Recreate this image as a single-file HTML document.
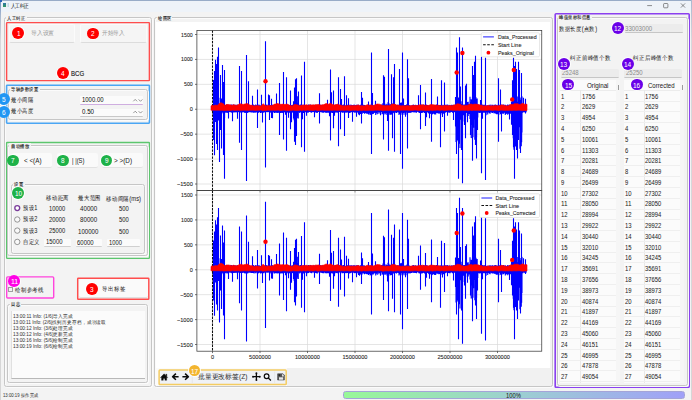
<!DOCTYPE html>
<html><head><meta charset="utf-8">
<style>
*{margin:0;padding:0;box-sizing:border-box}
html,body{width:692px;height:400px;overflow:hidden;background:#f3f3f3;font-family:"Liberation Sans",sans-serif;color:#222}
.a{position:absolute}
.t{position:absolute;white-space:nowrap;line-height:1;transform-origin:0 0;-webkit-text-stroke:0.05px currentColor}
</style></head><body>
<div class="a" style="left:0.00px;top:0.00px;width:692.00px;height:11.60px;background:#eef3f9"></div>
<div class="a" style="left:0.00px;top:0.00px;width:692.00px;height:0.80px;background:#98acc8"></div>
<div class="a" style="left:0.00px;top:0.00px;width:1.00px;height:400.00px;background:linear-gradient(180deg,#6f8fc0 0,#a9b9d0 16px,#d6d8dc 40px,#d6d6d6 100%)"></div>
<div class="a" style="left:691.00px;top:0.00px;width:1.00px;height:400.00px;background:linear-gradient(180deg,#a9b9d0 0,#d6d8dc 40px,#d6d6d6 100%)"></div>
<div class="a" style="left:0.00px;top:0.00px;width:1.60px;height:1.60px;background:#2a62b8"></div>
<div class="a" style="left:3.20px;top:3.40px;width:2.80px;height:3.80px;background:linear-gradient(180deg,#2f74a8,#2f9a5c)"></div>
<div class="a" style="left:6.30px;top:3.40px;width:2.60px;height:3.80px;background:linear-gradient(90deg,#f4f4f4,#b8d4e4)"></div>
<div id="t0" class="t" style="left:10.60px;top:4.02px;font-size:10.40px;color:#111;transform:scale(0.4300,0.540);">人工纠正</div>
<svg class="a" style="left:0;top:0" width="692" height="20"><path d="M647.2 5.6 H652" stroke="#444" stroke-width="0.6"/><rect x="663.6" y="3.5" width="4.3" height="4.3" rx="0.8" fill="none" stroke="#444" stroke-width="0.6"/><path d="M680.9 3.4 L685.1 7.6 M685.1 3.4 L680.9 7.6" stroke="#444" stroke-width="0.6"/></svg>
<div class="a" style="left:4px;top:17px;width:148px;height:370px;border:1px solid #c6c6c6;border-radius:2.5px;box-shadow:inset 1px 1px 0 #fbfbfb,1px 1px 0 #fbfbfb"></div>
<div class="a" style="left:5.95px;top:15.20px;width:20.65px;height:5.00px;background:#f3f3f3"></div>
<div id="t1" class="t" style="left:7.15px;top:15.53px;font-size:9.80px;color:#222;transform:scale(0.4562,0.540);-webkit-text-stroke:0.18px #222">人工纠正</div>
<svg class="a" style="left:0;top:0" width="692" height="400"><rect x="6.6" y="22.6" width="142.8" height="58" rx="0.6" fill="none" stroke="#ff4d4d" stroke-width="1.45"/></svg>
<div class="a" style="left:8.70px;top:23.60px;width:66.30px;height:19.00px;background:#f5f5f5;border-radius:2px;border:0.6px solid #fbfbfb;border-bottom:1px solid #dcdcdc"></div>
<div class="a" style="left:79.80px;top:23.60px;width:67.40px;height:19.00px;background:#f5f5f5;border-radius:2px;border:0.6px solid #fbfbfb;border-bottom:1px solid #dcdcdc"></div>
<div id="t2" class="t" style="left:30.70px;top:29.95px;font-size:11.40px;color:#9c9c9c;transform:scale(0.5273,0.540);">导入设置</div>
<div id="t3" class="t" style="left:102.30px;top:29.97px;font-size:11.40px;color:#9c9c9c;transform:scale(0.5091,0.540);">开始导入</div>
<div class="a" style="left:11.70px;top:26.20px;width:13.40px;height:13.40px;border-radius:50%;background:rgba(255,255,255,0.85)"></div>
<div class="a" style="left:12.40px;top:26.90px;width:12.00px;height:12.00px;border-radius:50%;background:#ff0000"></div>
<div id="t4" class="t" style="left:16.60px;top:29.80px;font-size:14.80px;color:#fff;transform:scale(0.4372,0.540);">1</div>
<div class="a" style="left:86.60px;top:26.80px;width:12.80px;height:12.80px;border-radius:50%;background:rgba(255,255,255,0.85)"></div>
<div class="a" style="left:87.30px;top:27.50px;width:11.40px;height:11.40px;border-radius:50%;background:#ff0000"></div>
<div id="t5" class="t" style="left:91.20px;top:30.10px;font-size:14.80px;color:#fff;transform:scale(0.4372,0.540);">2</div>
<div class="a" style="left:56.20px;top:66.65px;width:13.40px;height:13.40px;border-radius:50%;background:rgba(255,255,255,0.85)"></div>
<div class="a" style="left:56.90px;top:67.35px;width:12.00px;height:12.00px;border-radius:50%;background:#ff0000"></div>
<div id="t6" class="t" style="left:61.10px;top:70.25px;font-size:14.80px;color:#fff;transform:scale(0.4372,0.540);">4</div>
<div id="t7" class="t" style="left:70.95px;top:69.90px;font-size:14.80px;color:#1a1a1a;transform:scale(0.4099,0.540);-webkit-text-stroke:0.3px #1a1a1a">BCG</div>
<svg class="a" style="left:0;top:0" width="692" height="400"><rect x="6.6" y="85.2" width="142.8" height="38.0" rx="0.6" fill="none" stroke="#4aa6f4" stroke-width="1.6"/></svg>
<div class="a" style="left:8px;top:89px;width:140px;height:31px;border:1px solid #c6c6c6;border-radius:2.5px;box-shadow:inset 1px 1px 0 #fbfbfb,1px 1px 0 #fbfbfb"></div>
<div class="a" style="left:9.70px;top:86.50px;width:30.00px;height:5.00px;background:#f3f3f3"></div>
<div id="t8" class="t" style="left:10.90px;top:86.54px;font-size:9.80px;color:#222;transform:scale(0.4600,0.540);-webkit-text-stroke:0.18px #222">导轴参数设置</div>
<div id="t9" class="t" style="left:10.90px;top:97.13px;font-size:12.00px;color:#222;transform:scale(0.4667,0.540);">最小间隔</div>
<div id="t10" class="t" style="left:10.90px;top:108.40px;font-size:12.00px;color:#222;transform:scale(0.4667,0.540);">最小高度</div>
<div class="a" style="left:80.20px;top:95.80px;width:62.50px;height:9.20px;background:#fbfbfb;border-radius:1px;border-bottom:1px solid #cfaee0"></div>
<div class="a" style="left:80.20px;top:108.60px;width:62.50px;height:8.40px;background:#fbfbfb;border-radius:1px;border-bottom:0.9px solid #c8c8c8"></div>
<div id="t11" class="t" style="left:81.70px;top:97.05px;font-size:12.00px;color:#111;transform:scale(0.4955,0.540);">1000.00</div>
<div id="t12" class="t" style="left:81.60px;top:109.03px;font-size:12.00px;color:#111;transform:scale(0.5137,0.540);">0.50</div>
<svg class="a" style="left:0;top:0" width="160" height="130"><path d="M133.3 101.3 L135.2 99.4 L137.1 101.3 M138.6 99.4 L140.5 101.3 L142.4 99.4 M133.3 113.1 L135.2 111.2 L137.1 113.1 M138.6 111.2 L140.5 113.1 L142.4 111.2" stroke="#555" stroke-width="0.6" fill="none"/></svg>
<div class="a" style="left:-2.95px;top:92.50px;width:13.40px;height:13.40px;border-radius:50%;background:rgba(255,255,255,0.85)"></div>
<div class="a" style="left:-2.25px;top:93.20px;width:12.00px;height:12.00px;border-radius:50%;background:#2196f3"></div>
<div id="t13" class="t" style="left:1.95px;top:96.10px;font-size:14.80px;color:#fff;transform:scale(0.4372,0.540);">5</div>
<div class="a" style="left:-2.95px;top:104.90px;width:13.40px;height:13.40px;border-radius:50%;background:rgba(255,255,255,0.85)"></div>
<div class="a" style="left:-2.25px;top:105.60px;width:12.00px;height:12.00px;border-radius:50%;background:#2196f3"></div>
<div id="t14" class="t" style="left:1.95px;top:108.50px;font-size:14.80px;color:#fff;transform:scale(0.4372,0.540);">6</div>
<svg class="a" style="left:0;top:0" width="692" height="400"><rect x="6.6" y="142.5" width="142.8" height="115.8" rx="0.6" fill="none" stroke="#5cc66e" stroke-width="1.3"/></svg>
<div class="a" style="left:7px;top:145px;width:141px;height:111px;border:1px solid #c6c6c6;border-radius:2.5px;box-shadow:inset 1px 1px 0 #fbfbfb,1px 1px 0 #fbfbfb"></div>
<div class="a" style="left:9.40px;top:142.70px;width:21.20px;height:5.00px;background:#f3f3f3"></div>
<div id="t15" class="t" style="left:10.60px;top:143.86px;font-size:9.80px;color:#222;transform:scale(0.4700,0.540);-webkit-text-stroke:0.18px #222">自动播放</div>
<div class="a" style="left:12.00px;top:153.00px;width:40.00px;height:15.20px;background:#fafafa;border-radius:2px;border-bottom:0.8px solid #e2e2e2"></div>
<div class="a" style="left:57.20px;top:153.00px;width:40.50px;height:15.20px;background:#fafafa;border-radius:2px;border-bottom:0.8px solid #e2e2e2"></div>
<div class="a" style="left:101.70px;top:153.00px;width:41.30px;height:15.20px;background:#fafafa;border-radius:2px;border-bottom:0.8px solid #e2e2e2"></div>
<div id="t16" class="t" style="left:23.75px;top:157.96px;font-size:12.00px;color:#222;transform:scale(0.5246,0.540);">&lt; &lt;(A)</div>
<div id="t17" class="t" style="left:71.50px;top:157.81px;font-size:12.00px;color:#222;transform:scale(0.4848,0.540);">| |(S)</div>
<div id="t18" class="t" style="left:114.40px;top:158.13px;font-size:12.00px;color:#222;transform:scale(0.5292,0.540);">&gt; &gt;(D)</div>
<div class="a" style="left:6.75px;top:154.05px;width:12.70px;height:12.70px;border-radius:50%;background:rgba(255,255,255,0.85)"></div>
<div class="a" style="left:7.45px;top:154.75px;width:11.30px;height:11.30px;border-radius:50%;background:#1db248"></div>
<div id="t19" class="t" style="left:11.30px;top:157.30px;font-size:14.80px;color:#fff;transform:scale(0.4372,0.540);">7</div>
<div class="a" style="left:56.65px;top:154.00px;width:12.70px;height:12.70px;border-radius:50%;background:rgba(255,255,255,0.85)"></div>
<div class="a" style="left:57.35px;top:154.70px;width:11.30px;height:11.30px;border-radius:50%;background:#1db248"></div>
<div id="t20" class="t" style="left:61.20px;top:157.25px;font-size:14.80px;color:#fff;transform:scale(0.4372,0.540);">8</div>
<div class="a" style="left:100.05px;top:154.00px;width:12.70px;height:12.70px;border-radius:50%;background:rgba(255,255,255,0.85)"></div>
<div class="a" style="left:100.75px;top:154.70px;width:11.30px;height:11.30px;border-radius:50%;background:#1db248"></div>
<div id="t21" class="t" style="left:104.60px;top:157.25px;font-size:14.80px;color:#fff;transform:scale(0.4372,0.540);">9</div>
<div class="a" style="left:11px;top:184px;width:134px;height:70px;border:1px solid #c6c6c6;border-radius:2.5px;box-shadow:inset 1px 1px 0 #fbfbfb,1px 1px 0 #fbfbfb"></div>
<div class="a" style="left:13.20px;top:181.70px;width:11.75px;height:5.00px;background:#f3f3f3"></div>
<div id="t22" class="t" style="left:14.40px;top:181.94px;font-size:9.80px;color:#222;transform:scale(0.4675,0.540);-webkit-text-stroke:0.18px #222">设置</div>
<div class="a" style="left:11.40px;top:186.40px;width:13.40px;height:13.40px;border-radius:50%;background:rgba(255,255,255,0.85)"></div>
<div class="a" style="left:12.10px;top:187.10px;width:12.00px;height:12.00px;border-radius:50%;background:#1db248"></div>
<div id="t23" class="t" style="left:14.50px;top:190.00px;font-size:14.80px;color:#fff;transform:scale(0.4372,0.540);">10</div>
<div id="t24" class="t" style="left:46.25px;top:195.40px;font-size:12.00px;color:#222;transform:scale(0.4823,0.540);">移动距离</div>
<div id="t25" class="t" style="left:78.00px;top:195.05px;font-size:12.00px;color:#222;transform:scale(0.4792,0.540);">最大范围</div>
<div id="t26" class="t" style="left:106.00px;top:196.06px;font-size:12.00px;color:#222;transform:scale(0.4861,0.540);">移动间隔(ms)</div>
<div id="t27" class="t" style="left:22.50px;top:205.01px;font-size:12.00px;color:#222;transform:scale(0.4692,0.540);">预设1</div>
<div id="t28" class="t" style="left:49.40px;top:206.03px;font-size:12.00px;color:#222;transform:scale(0.4854,0.540);">10000</div>
<div id="t29" class="t" style="left:80.40px;top:206.12px;font-size:12.00px;color:#222;transform:scale(0.5154,0.540);">40000</div>
<div id="t30" class="t" style="left:118.60px;top:206.13px;font-size:12.00px;color:#222;transform:scale(0.4892,0.540);">500</div>
<div id="t31" class="t" style="left:22.50px;top:216.31px;font-size:12.00px;color:#222;transform:scale(0.4692,0.540);">预设2</div>
<div id="t32" class="t" style="left:49.40px;top:217.35px;font-size:12.00px;color:#222;transform:scale(0.4854,0.540);">20000</div>
<div id="t33" class="t" style="left:80.40px;top:217.29px;font-size:12.00px;color:#222;transform:scale(0.5154,0.540);">80000</div>
<div id="t34" class="t" style="left:118.60px;top:217.33px;font-size:12.00px;color:#222;transform:scale(0.4892,0.540);">500</div>
<div id="t35" class="t" style="left:22.50px;top:227.63px;font-size:12.00px;color:#222;transform:scale(0.4692,0.540);">预设3</div>
<div id="t36" class="t" style="left:49.40px;top:227.64px;font-size:12.00px;color:#222;transform:scale(0.4854,0.540);">25000</div>
<div id="t37" class="t" style="left:78.20px;top:228.53px;font-size:12.00px;color:#222;transform:scale(0.5094,0.540);">100000</div>
<div id="t38" class="t" style="left:118.60px;top:228.63px;font-size:12.00px;color:#222;transform:scale(0.4892,0.540);">500</div>
<div id="t39" class="t" style="left:22.50px;top:238.52px;font-size:12.00px;color:#222;transform:scale(0.4778,0.540);">自定义</div>
<svg class="a" style="left:0;top:0" width="160" height="260"><circle cx="17.25" cy="208.1" r="2.45" fill="#fff" stroke="#7b3c9b" stroke-width="1.35"/><circle cx="17.25" cy="219.5" r="2.7" fill="#f9f9f9" stroke="#555" stroke-width="0.6"/><circle cx="17.25" cy="230.6" r="2.7" fill="#f9f9f9" stroke="#555" stroke-width="0.6"/><circle cx="17.25" cy="241.9" r="2.7" fill="#f9f9f9" stroke="#555" stroke-width="0.6"/></svg>
<div class="a" style="left:44.40px;top:238.60px;width:26.20px;height:8.40px;background:#fbfbfb;border-radius:1px;border-bottom:0.8px solid #d0d0d0"></div>
<div class="a" style="left:75.60px;top:239.00px;width:26.40px;height:8.00px;background:#fbfbfb;border-radius:1px;border-bottom:0.8px solid #d0d0d0"></div>
<div class="a" style="left:107.00px;top:239.00px;width:33.00px;height:8.00px;background:#fbfbfb;border-radius:1px;border-bottom:0.8px solid #d0d0d0"></div>
<div id="t40" class="t" style="left:46.00px;top:239.24px;font-size:12.00px;color:#222;transform:scale(0.4944,0.540);">15000</div>
<div id="t41" class="t" style="left:77.00px;top:239.78px;font-size:12.00px;color:#222;transform:scale(0.4974,0.540);">60000</div>
<div id="t42" class="t" style="left:108.60px;top:239.72px;font-size:12.00px;color:#222;transform:scale(0.4868,0.540);">1000</div>
<svg class="a" style="left:0;top:0" width="692" height="400"><rect x="6.7" y="276.9" width="47" height="21.1" rx="1" fill="none" stroke="#ff44dd" stroke-width="1.4"/></svg>
<div id="t43" class="t" style="left:14.75px;top:286.92px;font-size:11.60px;color:#222;transform:scale(0.4833,0.540);">绘制参考线</div>
<div class="a" style="left:7.52px;top:274.57px;width:13.15px;height:13.15px;border-radius:50%;background:rgba(255,255,255,0.85)"></div>
<div class="a" style="left:8.22px;top:275.27px;width:11.75px;height:11.75px;border-radius:50%;background:#ff00e6"></div>
<div id="t44" class="t" style="left:10.50px;top:278.05px;font-size:14.80px;color:#fff;transform:scale(0.4683,0.540);">11</div>
<svg class="a" style="left:0;top:0" width="60" height="300"><rect x="8.5" y="287.5" width="3.5" height="3.6" fill="none" stroke="#8a8a8a" stroke-width="0.8" shape-rendering="crispEdges"/></svg>
<svg class="a" style="left:0;top:0" width="692" height="400"><rect x="77.7" y="278.2" width="71.1" height="21.1" rx="0.6" fill="none" stroke="#ff4d4d" stroke-width="1.45"/></svg>
<div class="a" style="left:78.80px;top:279.20px;width:68.90px;height:19.00px;background:#fafafa;border-radius:2px;border-bottom:0.8px solid #e0e0e0"></div>
<div class="a" style="left:85.20px;top:282.20px;width:13.20px;height:13.20px;border-radius:50%;background:rgba(255,255,255,0.85)"></div>
<div class="a" style="left:85.90px;top:282.90px;width:11.80px;height:11.80px;border-radius:50%;background:#ff0000"></div>
<div id="t45" class="t" style="left:90.00px;top:285.70px;font-size:14.80px;color:#fff;transform:scale(0.4372,0.540);">3</div>
<div id="t46" class="t" style="left:101.90px;top:286.33px;font-size:11.80px;color:#222;transform:scale(0.4875,0.540);">导出标签</div>
<div class="a" style="left:7px;top:304px;width:141px;height:79px;border:1px solid #c6c6c6;border-radius:2.5px;box-shadow:inset 1px 1px 0 #fbfbfb,1px 1px 0 #fbfbfb"></div>
<div class="a" style="left:9.80px;top:302.35px;width:11.40px;height:5.00px;background:#f3f3f3"></div>
<div id="t47" class="t" style="left:11.00px;top:301.71px;font-size:9.80px;color:#222;transform:scale(0.4500,0.540);-webkit-text-stroke:0.18px #222">日志</div>
<div class="a" style="left:10.90px;top:311.00px;width:133.80px;height:67.90px;background:#fbfbfb;border-left:0.6px solid #e0e0e0;border-bottom:1.3px solid #b8b8b8"></div>
<div id="t48" class="t" style="left:12.90px;top:313.81px;font-size:9.60px;color:#333;transform:scale(0.5022,0.540);">13:00:11 Info: (1/6)导入完成</div>
<div id="t49" class="t" style="left:12.90px;top:319.75px;font-size:9.60px;color:#333;transform:scale(0.4901,0.540);">13:00:11 Info: (2/6)找到历史存档，成功读取</div>
<div id="t50" class="t" style="left:12.90px;top:325.69px;font-size:9.60px;color:#333;transform:scale(0.4993,0.540);">13:00:12 Info: (3/6)处理完成</div>
<div id="t51" class="t" style="left:12.90px;top:331.63px;font-size:9.60px;color:#333;transform:scale(0.4993,0.540);">13:00:12 Info: (4/6)更新完成</div>
<div id="t52" class="t" style="left:12.90px;top:337.57px;font-size:9.60px;color:#333;transform:scale(0.4993,0.540);">13:00:16 Info: (5/6)绘制完成</div>
<div id="t53" class="t" style="left:12.90px;top:343.51px;font-size:9.60px;color:#333;transform:scale(0.4993,0.540);">13:00:19 Info: (6/6)绘制完成</div>
<div class="a" style="left:154px;top:17px;width:399px;height:370px;border:1px solid #c6c6c6;border-radius:2.5px;box-shadow:inset 1px 1px 0 #fbfbfb,1px 1px 0 #fbfbfb"></div>
<div class="a" style="left:156.55px;top:15.10px;width:15.90px;height:5.00px;background:#f3f3f3"></div>
<div id="t54" class="t" style="left:157.75px;top:15.74px;font-size:9.80px;color:#222;transform:scale(0.4500,0.540);-webkit-text-stroke:0.18px #222">绘图区</div>
<div class="a" style="left:155.60px;top:21.90px;width:394.40px;height:346.10px;background:#ffffff"></div>
<div class="a" style="left:155.60px;top:368.00px;width:395.90px;height:17.60px;background:#fbfbfb"></div>
<div class="a" style="left:287.20px;top:368.00px;width:264.30px;height:17.60px;background:#f1f1f1"></div>
<svg class="a" style="left:0;top:0" width="692" height="400" viewBox="0 0 692 400" font-family="Liberation Sans, sans-serif">
<g transform="translate(0,0)">
<line x1="196.9" x2="541.75" y1="34.50" y2="34.50" stroke="#dadada" stroke-width="0.7"/>
<line x1="195.0" x2="196.9" y1="34.50" y2="34.50" stroke="#333" stroke-width="0.7"/>
<text x="192.80" y="36.50" font-size="5.6" text-anchor="end" textLength="11.7" lengthAdjust="spacingAndGlyphs" fill="#222" stroke="#222" stroke-width="0.08">1500</text>
<line x1="196.9" x2="541.75" y1="59.42" y2="59.42" stroke="#dadada" stroke-width="0.7"/>
<line x1="195.0" x2="196.9" y1="59.42" y2="59.42" stroke="#333" stroke-width="0.7"/>
<text x="192.80" y="61.42" font-size="5.6" text-anchor="end" textLength="11.7" lengthAdjust="spacingAndGlyphs" fill="#222" stroke="#222" stroke-width="0.08">1000</text>
<line x1="196.9" x2="541.75" y1="84.34" y2="84.34" stroke="#dadada" stroke-width="0.7"/>
<line x1="195.0" x2="196.9" y1="84.34" y2="84.34" stroke="#333" stroke-width="0.7"/>
<text x="192.80" y="86.34" font-size="5.6" text-anchor="end" textLength="8.8" lengthAdjust="spacingAndGlyphs" fill="#222" stroke="#222" stroke-width="0.08">500</text>
<line x1="196.9" x2="541.75" y1="109.25" y2="109.25" stroke="#dadada" stroke-width="0.7"/>
<line x1="195.0" x2="196.9" y1="109.25" y2="109.25" stroke="#333" stroke-width="0.7"/>
<text x="192.80" y="111.25" font-size="5.6" text-anchor="end" textLength="3.1" lengthAdjust="spacingAndGlyphs" fill="#222" stroke="#222" stroke-width="0.08">0</text>
<line x1="196.9" x2="541.75" y1="134.16" y2="134.16" stroke="#dadada" stroke-width="0.7"/>
<line x1="195.0" x2="196.9" y1="134.16" y2="134.16" stroke="#333" stroke-width="0.7"/>
<text x="192.80" y="136.16" font-size="5.6" text-anchor="end" textLength="12.6" lengthAdjust="spacingAndGlyphs" fill="#222" stroke="#222" stroke-width="0.08">−500</text>
<line x1="196.9" x2="541.75" y1="159.08" y2="159.08" stroke="#dadada" stroke-width="0.7"/>
<line x1="195.0" x2="196.9" y1="159.08" y2="159.08" stroke="#333" stroke-width="0.7"/>
<text x="192.80" y="161.08" font-size="5.6" text-anchor="end" textLength="15.9" lengthAdjust="spacingAndGlyphs" fill="#222" stroke="#222" stroke-width="0.08">−1000</text>
<line x1="196.9" x2="541.75" y1="184.00" y2="184.00" stroke="#dadada" stroke-width="0.7"/>
<line x1="195.0" x2="196.9" y1="184.00" y2="184.00" stroke="#333" stroke-width="0.7"/>
<text x="192.80" y="186.00" font-size="5.6" text-anchor="end" textLength="15.9" lengthAdjust="spacingAndGlyphs" fill="#222" stroke="#222" stroke-width="0.08">−1500</text>
<line x1="212.50" x2="212.50" y1="30.5" y2="190.6" stroke="#dadada" stroke-width="0.7"/>
<line x1="212.50" x2="212.50" y1="190.6" y2="192.5" stroke="#333" stroke-width="0.7"/>
<line x1="260.00" x2="260.00" y1="30.5" y2="190.6" stroke="#dadada" stroke-width="0.7"/>
<line x1="260.00" x2="260.00" y1="190.6" y2="192.5" stroke="#333" stroke-width="0.7"/>
<line x1="307.50" x2="307.50" y1="30.5" y2="190.6" stroke="#dadada" stroke-width="0.7"/>
<line x1="307.50" x2="307.50" y1="190.6" y2="192.5" stroke="#333" stroke-width="0.7"/>
<line x1="355.00" x2="355.00" y1="30.5" y2="190.6" stroke="#dadada" stroke-width="0.7"/>
<line x1="355.00" x2="355.00" y1="190.6" y2="192.5" stroke="#333" stroke-width="0.7"/>
<line x1="402.50" x2="402.50" y1="30.5" y2="190.6" stroke="#dadada" stroke-width="0.7"/>
<line x1="402.50" x2="402.50" y1="190.6" y2="192.5" stroke="#333" stroke-width="0.7"/>
<line x1="450.00" x2="450.00" y1="30.5" y2="190.6" stroke="#dadada" stroke-width="0.7"/>
<line x1="450.00" x2="450.00" y1="190.6" y2="192.5" stroke="#333" stroke-width="0.7"/>
<line x1="497.50" x2="497.50" y1="30.5" y2="190.6" stroke="#dadada" stroke-width="0.7"/>
<line x1="497.50" x2="497.50" y1="190.6" y2="192.5" stroke="#333" stroke-width="0.7"/>
<path d="M212.50 105.11V112.52M213.30 104.54V112.41M214.10 105.04V112.55M214.90 105.43V112.46M215.70 104.89V112.80M216.50 105.54V112.21M217.30 105.54V112.82M218.10 104.82V111.90M218.90 104.47V113.01M219.70 104.87V112.59M220.50 105.46V111.87M221.30 105.02V111.92M222.10 105.42V112.14M222.90 105.61V112.41M223.70 105.12V112.86M224.50 105.03V112.62M225.30 105.05V112.64M226.10 105.10V112.18M226.90 104.45V113.04M227.70 104.64V112.70M228.50 105.27V112.13M229.30 105.30V111.93M230.10 104.73V112.33M230.90 104.63V112.31M231.70 104.50V112.87M232.50 105.65V112.10M233.30 104.56V112.41M234.10 104.47V112.33M234.90 105.56V112.61M235.70 104.72V112.17M236.50 105.55V112.25M237.30 104.49V112.76M238.10 105.51V112.15M238.90 105.53V111.92M239.70 104.69V112.06M240.50 104.98V112.39M241.30 105.42V112.73M242.10 105.49V112.62M242.90 105.51V112.35M243.70 105.39V112.17M244.50 104.48V112.81M245.30 105.29V112.91M246.10 105.40V112.32M246.90 104.62V112.62M247.70 105.53V113.04M248.50 105.39V112.16M249.30 104.72V112.24M250.10 105.29V111.94M250.90 105.54V112.55M251.70 105.36V112.57M252.50 105.20V112.39M253.30 104.50V112.43M254.10 104.96V112.89M254.90 105.43V112.03M255.70 104.56V112.83M256.50 105.35V112.08M257.30 104.76V112.98M258.10 105.41V112.99M258.90 104.59V112.57M259.70 105.14V111.97M260.50 105.60V113.01M261.30 105.36V112.70M262.10 105.34V112.84M262.90 104.93V112.20M263.70 105.44V112.71M264.50 105.57V112.12M265.30 104.98V112.87M266.10 104.91V112.19M266.90 104.55V112.09M267.70 105.63V112.17M268.50 105.12V111.92M269.30 105.44V112.29M270.10 104.96V112.01M270.90 105.22V112.92M271.70 104.47V112.64M272.50 104.82V112.55M273.30 105.48V111.89M274.10 105.63V112.94M274.90 104.81V113.01M275.70 105.62V112.61M276.50 105.07V112.73M277.30 105.27V113.05M278.10 105.56V112.51M278.90 104.77V112.93M279.70 104.77V112.69M280.50 104.70V112.95M281.30 105.23V112.67M282.10 104.57V112.90M282.90 105.15V112.80M283.70 104.61V112.54M284.50 104.90V112.31M285.30 104.95V112.58M286.10 105.55V112.62M286.90 104.46V112.91M287.70 104.78V112.32M288.50 104.77V112.55M289.30 105.12V112.86M290.10 105.55V112.75M290.90 105.61V112.57M291.70 105.07V112.13M292.50 104.81V112.45M293.30 104.91V112.95M294.10 105.34V111.86M294.90 105.29V112.66M295.70 105.41V112.05M296.50 104.56V112.64M297.30 105.12V112.92M298.10 105.26V112.65M298.90 105.41V112.37M299.70 104.68V112.95M300.50 104.59V112.31M301.30 104.95V112.23M302.10 105.49V112.45M302.90 104.65V112.87M303.70 104.80V112.99M304.50 105.32V112.05M305.30 105.11V112.18M306.10 105.39V112.35M306.90 104.90V112.44M307.70 105.27V112.86M308.50 104.47V112.39M309.30 105.56V111.89M310.10 104.60V111.90M310.90 104.80V112.53M311.70 105.28V112.80M312.50 105.63V112.01M313.30 105.10V111.88M314.10 104.65V112.13M314.90 105.48V111.91M315.70 104.89V112.39M316.50 104.89V112.64M317.30 104.68V113.00M318.10 104.83V112.09M318.90 105.08V112.06M319.70 105.64V112.42M320.50 104.79V112.06M321.30 105.32V112.26M322.10 104.81V112.47M322.90 104.91V112.76M323.70 105.18V112.80M324.50 104.56V111.95M325.30 104.53V112.72M326.10 105.49V112.39M326.90 104.90V112.94M327.70 105.20V112.53M328.50 104.59V112.81M329.30 104.52V112.41M330.10 104.87V112.10M330.90 104.78V112.83M331.70 104.88V112.71M332.50 105.39V112.93M333.30 104.47V113.02M334.10 105.01V112.80M334.90 105.27V112.94M335.70 104.62V112.27M336.50 105.55V112.38M337.30 104.99V112.77M338.10 105.07V111.88M338.90 104.68V111.93M339.70 104.69V112.06M340.50 105.25V112.80M341.30 105.48V112.03M342.10 105.03V112.72M342.90 104.64V112.68M343.70 104.52V112.44M344.50 104.51V111.95M345.30 105.38V112.48M346.10 105.30V112.72M346.90 104.88V112.48M347.70 104.64V112.52M348.50 105.28V112.31M349.30 104.64V112.93M350.10 105.40V112.87M350.90 104.49V112.48M351.70 104.96V112.09M352.50 105.01V112.45M353.30 104.92V111.88M354.10 104.49V112.47M354.90 105.17V112.81M355.70 104.97V112.44M356.50 104.82V111.93M357.30 105.00V112.35M358.10 104.50V112.96M358.90 105.33V112.42M359.70 105.50V112.37M360.50 104.67V114.12M361.30 105.27V113.62M362.10 104.54V113.95M362.90 105.62V112.65M363.70 104.83V113.12M364.50 104.91V113.80M365.30 105.50V113.09M366.10 105.41V113.58M366.90 105.20V113.67M367.70 105.46V113.67M368.50 104.88V114.61M369.30 104.92V113.46M370.10 104.76V115.08M370.90 105.27V114.53M371.70 105.39V115.27M372.50 105.49V113.95M373.30 105.34V114.05M374.10 105.14V113.11M374.90 105.17V112.72M375.70 105.41V114.95M376.50 104.49V113.25M377.30 104.74V114.17M378.10 105.42V112.20M378.90 105.61V113.80M379.70 104.97V112.49M380.50 105.41V115.33M381.30 104.54V112.12M382.10 104.51V114.32M382.90 105.26V113.70M383.70 105.13V112.60M384.50 104.81V113.32M385.30 105.11V113.75M386.10 105.42V113.33M386.90 105.63V114.93M387.70 104.80V114.46M388.50 105.16V113.83M389.30 104.47V113.46M390.10 104.56V114.69M390.90 104.67V114.58M391.70 104.59V114.60M392.50 104.73V112.34M393.30 104.78V111.93M394.10 105.24V112.41M394.90 105.64V112.28M395.70 104.88V112.60M396.50 105.37V112.98M397.30 104.85V112.26M398.10 104.86V112.53M398.90 105.01V112.32M399.70 104.45V112.62M400.50 104.81V112.76M401.30 104.47V111.88M402.10 104.91V112.74M402.90 105.34V112.33M403.70 105.59V112.08M404.50 105.20V111.97M405.30 105.35V112.94M406.10 104.99V112.46M406.90 104.49V112.53M407.70 104.46V112.62M408.50 104.68V111.94M409.30 104.93V112.76M410.10 105.60V112.97M410.90 105.46V112.42M411.70 105.45V112.44M412.50 104.92V111.92M413.30 104.52V112.35M414.10 105.02V112.57M414.90 105.21V112.19M415.70 104.86V112.52M416.50 105.31V112.71M417.30 105.29V111.87M418.10 105.36V111.90M418.90 105.46V112.76M419.70 105.18V112.93M420.50 104.75V111.91M421.30 104.46V112.98M422.10 105.56V112.94M422.90 105.13V112.42M423.70 104.48V112.14M424.50 105.02V112.97M425.30 104.78V112.41M426.10 104.48V112.83M426.90 104.93V111.99M427.70 104.90V112.40M428.50 105.41V113.23M429.30 105.50V114.05M430.10 105.10V113.62M430.90 105.15V114.11M431.70 104.45V114.83M432.50 105.36V114.22M433.30 104.71V113.50M434.10 105.32V114.08M434.90 104.94V114.49M435.70 105.42V114.60M436.50 104.55V113.00M437.30 105.58V113.24M438.10 104.90V113.33M438.90 105.56V113.64M439.70 104.99V113.54M440.50 105.08V112.96M441.30 104.76V113.04M442.10 105.51V114.38M442.90 104.73V113.17M443.70 105.34V113.74M444.50 104.87V113.85M445.30 104.99V112.75M446.10 104.55V112.36M446.90 105.21V111.97M447.70 104.60V111.94M448.50 105.55V112.53M449.30 105.07V112.67M450.10 105.29V112.78M450.90 105.56V112.11M451.70 104.86V111.95M452.50 105.29V112.72M453.30 104.82V112.19M454.10 105.48V112.28M454.90 104.78V112.29M455.70 105.51V112.70M456.50 104.97V112.95M457.30 104.52V112.95M458.10 105.12V112.81M458.90 105.28V112.23M459.70 105.17V112.97M460.50 104.58V112.15M461.30 105.22V112.29M462.10 105.21V112.32M462.90 105.18V112.08M463.70 104.97V112.81M464.50 105.00V112.85M465.30 104.97V112.06M466.10 104.74V112.91M466.90 105.31V111.88M467.70 105.03V112.50M468.50 104.97V113.01M469.30 104.87V112.82M470.10 105.57V112.51M470.90 104.70V111.95M471.70 105.55V112.73M472.50 104.57V111.95M473.30 104.89V112.02M474.10 104.76V112.63M474.90 105.36V112.11M475.70 104.73V112.48M476.50 104.73V112.32M477.30 105.24V113.01M478.10 104.84V112.44M478.90 105.01V112.72M479.70 104.80V112.95M480.50 105.16V112.84M481.30 104.85V112.87M482.10 104.68V112.85M482.90 104.58V113.00M483.70 104.88V112.48M484.50 104.80V112.81M485.30 105.14V112.35M486.10 105.47V115.22M486.90 105.20V112.56M487.70 105.14V114.62M488.50 105.58V112.51M489.30 104.87V113.23M490.10 105.58V113.86M490.90 104.56V112.17M491.70 105.43V112.70M492.50 104.79V113.12M493.30 105.43V112.62M494.10 104.74V113.59M494.90 104.67V113.08M495.70 104.59V113.80M496.50 104.99V114.20M497.30 105.38V114.28M498.10 104.69V113.63M498.90 105.03V114.66M499.70 104.86V112.16M500.50 105.08V114.29M501.30 104.79V112.97M502.10 105.46V112.88M502.90 104.61V114.06M503.70 104.46V113.51M504.50 105.47V112.78M505.30 104.66V114.92M506.10 105.55V113.97M506.90 105.53V113.60M507.70 104.50V114.70M508.50 105.29V113.84M509.30 104.55V114.02M510.10 105.40V113.82M510.90 105.46V113.63M511.70 105.28V112.71M512.50 105.09V112.71M513.30 105.22V112.67M514.10 105.52V112.32M514.90 105.10V113.01M515.70 104.65V112.63M516.50 105.64V112.30M517.30 104.80V112.13M518.10 104.97V112.40M518.90 105.64V113.04M519.70 104.69V112.10M520.50 104.91V112.20M521.30 105.20V112.50M522.10 105.29V112.25M522.90 105.18V112.65M523.70 105.34V112.09M524.50 104.77V112.25M525.30 104.52V112.53M526.10 104.78V112.25M212.60 104.65V113.52M214.10 98.30V113.55M215.60 103.27V121.99M217.10 98.66V117.78M218.60 104.74V120.40M220.10 97.83V115.37M221.60 98.45V113.96M223.10 100.76V113.25M224.60 105.52V118.12M293.50 101.24V118.56M294.10 103.86V120.26M294.70 99.96V115.48M295.30 100.22V112.40M295.90 100.11V119.07M296.50 106.06V119.95M297.10 102.77V118.18M297.70 96.19V115.48M298.30 99.51V118.59M455.50 97.09V126.50M456.00 101.22V142.02M456.50 104.46V135.33M457.00 97.62V141.19M457.50 105.26V132.95M458.00 99.61V131.14M458.50 97.45V139.18M459.00 106.11V131.73M459.50 103.33V143.79M460.00 98.02V147.92M460.50 102.43V119.72M470.00 96.85V119.04M470.60 101.91V131.59M471.20 99.37V138.03M471.80 99.70V125.10M472.40 97.27V139.27M473.00 97.39V137.34M473.60 101.57V127.81M474.20 101.74V119.59M474.80 105.32V139.78M475.40 104.38V128.94M476.00 97.26V135.13M476.60 98.96V137.14M477.20 98.47V128.17M477.80 104.52V117.40M461.00 103.88V112.99M461.90 101.17V114.01M462.80 106.18V121.41M463.70 104.46V115.25M464.60 104.52V119.44M465.50 103.00V118.02M466.40 105.22V112.41M467.30 102.05V116.81M468.20 101.75V116.02M469.10 103.99V113.94M470.00 103.73V114.82M511.50 101.39V124.79M511.85 102.22V113.68M512.20 102.55V117.71M512.55 105.79V134.90M512.90 100.29V127.78M513.25 102.02V138.27M513.60 103.53V140.63M513.95 100.47V149.80M514.30 104.43V144.53M514.65 99.60V128.63M515.00 101.37V146.42M515.35 100.92V132.07M515.70 99.86V146.39M516.05 98.61V114.31M516.40 103.16V146.23M516.75 103.24V134.81M517.10 103.46V123.75M517.45 101.68V114.88M517.80 96.40V129.12M518.15 100.65V127.23M518.50 95.58V138.48M518.85 100.92V121.28M519.20 98.45V127.18M519.55 97.65V114.83M519.90 105.25V148.73M520.25 102.49V144.96M520.60 99.74V142.65M520.95 97.50V140.44M521.30 101.38V146.35M521.65 96.11V142.16M522.00 96.39V132.54M522.35 105.70V112.27M383.00 103.04V113.07M384.00 103.38V112.42M385.00 105.80V114.49M386.00 103.69V113.23M387.00 104.49V112.38M388.00 102.13V114.72M389.00 103.31V113.62M390.00 105.97V114.94M391.00 104.01V112.82M392.00 103.26V114.79M393.00 105.81V112.79M394.00 105.56V113.22M395.00 104.01V112.72M399.00 105.74V114.99M400.00 102.86V113.99M401.00 102.81V114.67M402.00 102.21V112.54M403.00 105.08V113.11M404.00 105.83V114.64M405.00 105.03V112.62M406.00 104.96V114.83M407.00 103.89V112.47M408.00 102.95V113.09M409.00 105.02V112.79M213.50 109.25V96.08M217.50 109.25V89.26M220.50 109.25V95.04M224.50 109.25V125.89M228.50 109.25V118.53M232.50 109.25V121.28M237.50 109.25V118.73M246.50 109.25V122.54M252.50 109.25V95.67M268.50 109.25V94.52M272.50 109.25V118.14M285.50 109.25V114.77M288.50 109.25V117.67M291.50 109.25V122.32M297.50 109.25V116.36M302.50 109.25V119.14M306.50 109.25V115.80M314.50 109.25V117.36M327.50 109.25V99.84M329.50 109.25V116.23M331.50 109.25V92.29M334.50 109.25V115.78M341.50 109.25V98.88M344.50 109.25V98.22M346.50 109.25V95.30M352.50 109.25V121.68M356.50 109.25V116.72M359.50 109.25V115.29M362.50 109.25V97.78M368.50 109.25V101.52M370.50 109.25V113.44M372.50 109.25V93.01M375.50 109.25V100.71M383.50 109.25V117.09M387.50 109.25V120.96M388.50 109.25V115.63M392.50 109.25V117.49M400.50 109.25V115.30M403.50 109.25V98.38M405.50 109.25V116.70M407.50 109.25V119.55M418.50 109.25V95.36M426.50 109.25V117.17M429.50 109.25V118.22M431.50 109.25V118.00M434.50 109.25V114.18M437.50 109.25V96.42M442.50 109.25V116.89M444.50 109.25V118.21M447.50 109.25V115.78M453.50 109.25V119.93M460.50 109.25V90.63M467.50 109.25V122.30M476.50 109.25V123.76M480.50 109.25V99.97M482.50 109.25V118.69M498.50 109.25V122.11M509.50 109.25V119.47M512.50 109.25V95.28M515.50 109.25V119.64M519.50 109.25V116.75M523.50 109.25V97.73M214.50 71.00V109.25M215.50 59.80V109.25M217.50 56.70V109.25M218.50 47.50V109.25M222.50 65.00V109.25M224.50 70.00V109.25M239.50 66.00V109.25M241.50 71.00V109.25M246.50 55.00V109.25M248.50 81.30V109.25M257.50 89.50V109.25M261.50 94.70V109.25M265.50 41.30V109.25M269.50 95.30V109.25M271.50 98.80V109.25M276.50 93.60V109.25M279.50 83.00V109.25M283.50 72.00V109.25M286.50 77.20V109.25M290.50 90.60V109.25M294.50 87.50V109.25M295.50 79.30V109.25M296.50 78.30V109.25M298.50 91.60V109.25M301.50 75.60V109.25M304.50 61.80V109.25M319.50 93.20V109.25M330.50 69.60V109.25M333.50 90.60V109.25M338.50 77.20V109.25M340.50 89.10V109.25M344.50 76.20V109.25M348.50 98.20V109.25M361.50 92.00V109.25M371.50 52.60V109.25M371.50 66.00V109.25M383.50 75.20V109.25M384.50 76.80V109.25M388.50 49.10V109.25M391.50 74.20V109.25M393.50 77.20V109.25M394.50 63.90V109.25M399.50 69.00V109.25M402.50 52.60V109.25M407.50 59.20V109.25M408.50 78.30V109.25M420.50 85.00V109.25M425.50 92.60V109.25M431.50 78.90V109.25M441.50 80.30V109.25M444.50 82.40V109.25M456.50 47.50V109.25M457.50 52.60V109.25M459.50 37.20V109.25M460.50 86.50V109.25M462.50 47.50V109.25M465.50 85.40V109.25M466.50 83.80V109.25M472.50 66.00V109.25M474.50 61.80V109.25M475.50 55.70V109.25M481.50 56.70V109.25M485.50 57.70V109.25M498.50 78.30V109.25M500.50 89.50V109.25M512.50 80.30V109.25M513.50 57.70V109.25M515.50 61.80V109.25M516.50 69.00V109.25M518.50 61.80V109.25M521.50 73.10V109.25M525.50 98.80V109.25M213.50 80.00V109.25M216.50 64.00V109.25M220.50 75.00V109.25M223.50 82.00V109.25M459.50 70.00V109.25M473.50 75.00V109.25M514.50 66.00V109.25M519.50 70.00V109.25M214.50 109.25V155.20M216.50 109.25V144.00M219.50 109.25V162.00M221.50 109.25V148.40M224.50 109.25V178.80M239.50 109.25V142.80M241.50 109.25V150.00M246.50 109.25V181.00M257.50 109.25V128.00M262.50 109.25V122.50M265.50 109.25V167.60M269.50 109.25V120.00M271.50 109.25V118.00M279.50 109.25V135.00M283.50 109.25V139.40M286.50 109.25V150.70M290.50 109.25V129.30M294.50 109.25V141.70M295.50 109.25V145.00M296.50 109.25V136.00M301.50 109.25V147.30M304.50 109.25V151.80M319.50 109.25V123.60M330.50 109.25V140.50M333.50 109.25V128.20M338.50 109.25V146.20M340.50 109.25V129.30M344.50 109.25V136.00M348.50 109.25V118.00M358.50 109.25V114.60M361.50 109.25V123.60M371.50 109.25V154.00M383.50 109.25V139.40M388.50 109.25V150.70M392.50 109.25V138.30M394.50 109.25V151.80M400.50 109.25V154.00M402.50 109.25V168.70M407.50 109.25V148.40M420.50 109.25V129.30M425.50 109.25V125.90M431.50 109.25V134.90M431.50 109.25V141.70M440.50 109.25V147.30M444.50 109.25V131.50M456.50 109.25V154.00M458.50 109.25V178.80M462.50 109.25V183.30M465.50 109.25V138.30M472.50 109.25V160.80M475.50 109.25V145.00M476.50 109.25V158.60M481.50 109.25V173.20M485.50 109.25V180.00M498.50 109.25V141.70M501.50 109.25V131.50M513.50 109.25V147.30M514.50 109.25V178.80M517.50 109.25V158.60M520.50 109.25V153.00M525.50 109.25V113.50M213.50 109.25V140.00M217.50 109.25V150.00M220.50 109.25V130.00M223.50 109.25V155.00M457.50 109.25V140.00M461.50 109.25V150.00M464.50 109.25V125.00M470.50 109.25V135.00M477.50 109.25V130.00M512.50 109.25V135.00M516.50 109.25V150.00M518.50 109.25V140.00M521.50 109.25V132.00" stroke="#0000ff" stroke-width="1.1" fill="none"/>
<line x1="212.5" x2="212.5" y1="30.5" y2="190.6" stroke="#111" stroke-width="1.05" stroke-dasharray="2.3 1.2"/>
<path d="M211.00 105.91 L212.00 105.28 L213.00 105.66 L214.00 105.45 L215.00 105.14 L216.00 104.99 L217.00 105.50 L218.00 104.67 L219.00 103.81 L220.00 103.23 L221.00 102.52 L222.00 103.25 L223.00 103.56 L224.00 104.35 L225.00 105.49 L226.00 104.46 L227.00 104.53 L228.00 104.45 L229.00 104.50 L230.00 104.88 L231.00 104.87 L232.00 105.61 L233.00 104.68 L234.00 104.84 L235.00 105.15 L236.00 105.19 L237.00 105.27 L238.00 104.83 L239.00 104.19 L240.00 103.46 L241.00 104.23 L242.00 104.11 L243.00 104.51 L244.00 104.22 L245.00 103.90 L246.00 103.76 L247.00 103.51 L248.00 103.86 L249.00 104.69 L250.00 105.05 L251.00 105.35 L252.00 105.17 L253.00 105.43 L254.00 106.00 L255.00 105.91 L256.00 105.59 L257.00 105.58 L258.00 105.69 L259.00 105.74 L260.00 105.96 L261.00 105.99 L262.00 105.08 L263.00 103.64 L264.00 104.62 L265.00 105.35 L266.00 105.83 L267.00 105.66 L268.00 105.45 L269.00 105.20 L270.00 105.74 L271.00 105.39 L272.00 105.57 L273.00 105.23 L274.00 104.30 L275.00 104.11 L276.00 103.90 L277.00 103.42 L278.00 103.62 L279.00 103.96 L280.00 104.22 L281.00 104.35 L282.00 104.35 L283.00 104.04 L284.00 104.58 L285.00 104.31 L286.00 104.37 L287.00 104.01 L288.00 104.50 L289.00 104.92 L290.00 105.53 L291.00 105.51 L292.00 105.91 L293.00 105.56 L294.00 104.75 L295.00 104.19 L296.00 104.77 L297.00 104.79 L298.00 105.02 L299.00 105.77 L300.00 105.41 L301.00 105.55 L302.00 105.10 L303.00 105.15 L304.00 104.91 L305.00 105.30 L306.00 104.79 L307.00 104.81 L308.00 105.46 L309.00 105.02 L310.00 104.87 L311.00 104.91 L312.00 105.08 L313.00 104.73 L314.00 104.93 L315.00 104.98 L316.00 104.28 L317.00 104.98 L318.00 104.32 L319.00 104.63 L320.00 104.75 L321.00 105.30 L322.00 104.83 L323.00 104.81 L324.00 104.55 L325.00 104.11 L326.00 103.39 L327.00 103.72 L328.00 104.19 L329.00 104.17 L330.00 103.25 L331.00 103.52 L332.00 104.40 L333.00 104.52 L334.00 105.08 L335.00 104.75 L336.00 104.87 L337.00 104.11 L338.00 104.30 L339.00 105.03 L340.00 105.03 L341.00 105.03 L342.00 105.64 L343.00 105.57 L344.00 105.99 L345.00 105.74 L346.00 105.79 L347.00 105.77 L348.00 105.31 L349.00 105.52 L350.00 105.49 L351.00 105.79 L352.00 105.39 L353.00 105.63 L354.00 105.38 L355.00 105.64 L356.00 105.44 L357.00 105.33 L358.00 104.88 L359.00 105.16 L360.00 105.72 L361.00 105.87 L362.00 105.62 L363.00 105.96 L364.00 105.79 L365.00 105.71 L366.00 105.41 L367.00 104.40 L368.00 105.12 L369.00 105.29 L370.00 105.21 L371.00 104.92 L372.00 105.19 L373.00 105.54 L374.00 105.39 L375.00 104.70 L376.00 104.52 L377.00 104.00 L378.00 103.98 L379.00 104.23 L380.00 104.17 L381.00 105.08 L382.00 105.15 L383.00 105.61 L384.00 105.54 L385.00 105.66 L386.00 105.74 L387.00 105.55 L388.00 105.52 L389.00 105.72 L390.00 105.54 L391.00 104.45 L392.00 104.16 L393.00 104.07 L394.00 104.04 L395.00 104.14 L396.00 104.91 L397.00 104.96 L398.00 105.18 L399.00 105.16 L400.00 105.75 L401.00 105.82 L402.00 105.87 L403.00 105.84 L404.00 105.63 L405.00 105.90 L406.00 105.84 L407.00 105.55 L408.00 105.67 L409.00 105.85 L410.00 105.66 L411.00 105.70 L412.00 105.36 L413.00 105.51 L414.00 105.47 L415.00 105.34 L416.00 105.62 L417.00 105.62 L418.00 105.30 L419.00 104.97 L420.00 104.77 L421.00 104.99 L422.00 104.91 L423.00 104.41 L424.00 105.40 L425.00 105.11 L426.00 105.39 L427.00 105.18 L428.00 105.58 L429.00 105.29 L430.00 104.79 L431.00 104.48 L432.00 104.74 L433.00 104.64 L434.00 105.12 L435.00 104.83 L436.00 105.28 L437.00 105.19 L438.00 105.12 L439.00 105.40 L440.00 105.39 L441.00 105.54 L442.00 105.88 L443.00 105.67 L444.00 105.58 L445.00 105.37 L446.00 105.52 L447.00 105.46 L448.00 105.64 L449.00 105.58 L450.00 105.19 L451.00 105.77 L452.00 105.67 L453.00 105.21 L454.00 105.08 L455.00 104.75 L456.00 104.63 L457.00 103.86 L458.00 103.69 L459.00 104.10 L460.00 104.07 L461.00 104.81 L462.00 105.39 L463.00 105.23 L464.00 105.87 L465.00 105.62 L466.00 105.59 L467.00 105.26 L468.00 105.23 L469.00 104.36 L470.00 104.31 L471.00 103.97 L472.00 104.28 L473.00 104.77 L474.00 103.99 L475.00 104.27 L476.00 104.06 L477.00 104.26 L478.00 104.67 L479.00 104.31 L480.00 105.32 L481.00 104.99 L482.00 105.14 L483.00 105.94 L484.00 105.85 L485.00 105.59 L486.00 105.89 L487.00 105.91 L488.00 105.32 L489.00 105.56 L490.00 105.95 L491.00 105.78 L492.00 105.85 L493.00 105.82 L494.00 105.71 L495.00 105.54 L496.00 105.54 L497.00 105.66 L498.00 105.70 L499.00 105.54 L500.00 105.54 L501.00 104.94 L502.00 104.71 L503.00 105.36 L504.00 104.98 L505.00 105.87 L506.00 105.80 L507.00 105.73 L508.00 105.98 L509.00 105.29 L510.00 104.84 L511.00 104.17 L512.00 104.60 L513.00 104.46 L514.00 104.02 L515.00 103.41 L516.00 103.97 L517.00 103.53 L518.00 103.69 L519.00 104.61 L520.00 104.43 L521.00 104.05 L522.00 103.45 L523.00 103.41 L524.00 103.74 L525.00 104.63 L526.00 104.07 L527.00 104.26 L527.00 110.48 L526.00 110.53 L525.00 110.46 L524.00 110.60 L523.00 110.64 L522.00 110.53 L521.00 110.55 L520.00 110.18 L519.00 110.17 L518.00 110.26 L517.00 110.35 L516.00 110.55 L515.00 110.22 L514.00 110.34 L513.00 110.34 L512.00 110.62 L511.00 110.38 L510.00 110.31 L509.00 110.35 L508.00 110.59 L507.00 110.20 L506.00 110.53 L505.00 110.55 L504.00 110.19 L503.00 110.53 L502.00 110.10 L501.00 110.32 L500.00 110.22 L499.00 110.63 L498.00 110.43 L497.00 110.34 L496.00 110.35 L495.00 110.10 L494.00 110.33 L493.00 110.43 L492.00 110.39 L491.00 110.21 L490.00 110.35 L489.00 110.05 L488.00 110.28 L487.00 110.36 L486.00 110.60 L485.00 110.35 L484.00 110.39 L483.00 110.26 L482.00 110.46 L481.00 110.11 L480.00 110.22 L479.00 110.62 L478.00 110.14 L477.00 110.40 L476.00 110.19 L475.00 110.48 L474.00 110.15 L473.00 110.22 L472.00 110.64 L471.00 110.36 L470.00 110.15 L469.00 110.58 L468.00 110.56 L467.00 110.61 L466.00 110.19 L465.00 110.60 L464.00 110.25 L463.00 110.33 L462.00 110.37 L461.00 110.30 L460.00 110.40 L459.00 110.58 L458.00 110.26 L457.00 110.24 L456.00 110.42 L455.00 110.33 L454.00 110.27 L453.00 110.42 L452.00 110.21 L451.00 110.07 L450.00 110.23 L449.00 110.06 L448.00 110.16 L447.00 110.33 L446.00 110.44 L445.00 110.35 L444.00 110.53 L443.00 110.18 L442.00 110.06 L441.00 110.18 L440.00 110.49 L439.00 110.15 L438.00 110.15 L437.00 110.08 L436.00 110.29 L435.00 110.51 L434.00 110.06 L433.00 110.64 L432.00 110.62 L431.00 110.16 L430.00 110.33 L429.00 110.56 L428.00 110.41 L427.00 110.33 L426.00 110.63 L425.00 110.53 L424.00 110.23 L423.00 110.39 L422.00 110.25 L421.00 110.15 L420.00 110.35 L419.00 110.60 L418.00 110.51 L417.00 110.24 L416.00 110.10 L415.00 110.18 L414.00 110.10 L413.00 110.62 L412.00 110.37 L411.00 110.51 L410.00 110.39 L409.00 110.37 L408.00 110.37 L407.00 110.12 L406.00 110.16 L405.00 110.23 L404.00 110.08 L403.00 110.26 L402.00 110.16 L401.00 110.09 L400.00 110.61 L399.00 110.21 L398.00 110.12 L397.00 110.27 L396.00 110.32 L395.00 110.62 L394.00 110.49 L393.00 110.58 L392.00 110.46 L391.00 110.13 L390.00 110.17 L389.00 110.62 L388.00 110.48 L387.00 110.14 L386.00 110.61 L385.00 110.26 L384.00 110.61 L383.00 110.63 L382.00 110.58 L381.00 110.17 L380.00 110.14 L379.00 110.60 L378.00 110.09 L377.00 110.28 L376.00 110.35 L375.00 110.06 L374.00 110.54 L373.00 110.34 L372.00 110.49 L371.00 110.41 L370.00 110.22 L369.00 110.28 L368.00 110.52 L367.00 110.25 L366.00 110.52 L365.00 110.52 L364.00 110.13 L363.00 110.28 L362.00 110.64 L361.00 110.60 L360.00 110.26 L359.00 110.27 L358.00 110.64 L357.00 110.30 L356.00 110.18 L355.00 110.20 L354.00 110.51 L353.00 110.10 L352.00 110.37 L351.00 110.52 L350.00 110.45 L349.00 110.49 L348.00 110.25 L347.00 110.23 L346.00 110.19 L345.00 110.16 L344.00 110.58 L343.00 110.20 L342.00 110.36 L341.00 110.21 L340.00 110.44 L339.00 110.19 L338.00 110.25 L337.00 110.52 L336.00 110.34 L335.00 110.20 L334.00 110.14 L333.00 110.16 L332.00 110.58 L331.00 110.19 L330.00 110.32 L329.00 110.45 L328.00 110.25 L327.00 110.37 L326.00 110.40 L325.00 110.21 L324.00 110.51 L323.00 110.06 L322.00 110.26 L321.00 110.25 L320.00 110.29 L319.00 110.55 L318.00 110.64 L317.00 110.53 L316.00 110.09 L315.00 110.05 L314.00 110.53 L313.00 110.50 L312.00 110.40 L311.00 110.36 L310.00 110.46 L309.00 110.55 L308.00 110.07 L307.00 110.06 L306.00 110.62 L305.00 110.57 L304.00 110.12 L303.00 110.07 L302.00 110.63 L301.00 110.36 L300.00 110.10 L299.00 110.61 L298.00 110.42 L297.00 110.42 L296.00 110.46 L295.00 110.40 L294.00 110.34 L293.00 110.06 L292.00 110.61 L291.00 110.57 L290.00 110.61 L289.00 110.62 L288.00 110.64 L287.00 110.61 L286.00 110.47 L285.00 110.25 L284.00 110.23 L283.00 110.13 L282.00 110.39 L281.00 110.63 L280.00 110.38 L279.00 110.34 L278.00 110.10 L277.00 110.34 L276.00 110.30 L275.00 110.47 L274.00 110.17 L273.00 110.35 L272.00 110.26 L271.00 110.37 L270.00 110.16 L269.00 110.37 L268.00 110.10 L267.00 110.36 L266.00 110.52 L265.00 110.56 L264.00 110.46 L263.00 110.64 L262.00 110.39 L261.00 110.07 L260.00 110.09 L259.00 110.45 L258.00 110.09 L257.00 110.57 L256.00 110.24 L255.00 110.64 L254.00 110.12 L253.00 110.39 L252.00 110.11 L251.00 110.59 L250.00 110.09 L249.00 110.44 L248.00 110.61 L247.00 110.12 L246.00 110.62 L245.00 110.19 L244.00 110.26 L243.00 110.39 L242.00 110.35 L241.00 110.62 L240.00 110.49 L239.00 110.27 L238.00 110.32 L237.00 110.19 L236.00 110.52 L235.00 110.27 L234.00 110.61 L233.00 110.08 L232.00 110.21 L231.00 110.52 L230.00 110.60 L229.00 110.45 L228.00 110.37 L227.00 110.49 L226.00 110.38 L225.00 110.42 L224.00 110.56 L223.00 110.57 L222.00 110.15 L221.00 110.57 L220.00 110.36 L219.00 110.22 L218.00 110.22 L217.00 110.21 L216.00 110.34 L215.00 110.13 L214.00 110.20 L213.00 110.23 L212.00 110.20 L211.00 110.37Z" fill="#ff0000" stroke="#ff0000" stroke-width="0.6" stroke-linejoin="round"/>
<circle cx="265.5" cy="81.25" r="2.2" fill="#ff0000"/>
<circle cx="456.7" cy="72.5" r="2.2" fill="#ff0000"/>
<circle cx="462.4" cy="53" r="2.2" fill="#ff0000"/>
<circle cx="513.8" cy="70" r="2.2" fill="#ff0000"/>
<circle cx="512.2" cy="99.4" r="2.2" fill="#ff0000"/>
<rect x="196.9" y="30.5" width="344.85" height="160.10" fill="none" stroke="#3a3a3a" stroke-width="0.75"/>
<rect x="481.2" y="32.8" width="58.30" height="24.00" rx="1.2" fill="#fff" fill-opacity="0.8" stroke="#d8d8d8" stroke-width="0.6"/>
<line x1="483.09999999999997" x2="493.9" y1="36.9" y2="36.9" stroke="#0000ff" stroke-width="0.9"/>
<line x1="483.09999999999997" x2="493.9" y1="44.8" y2="44.8" stroke="#111" stroke-width="1.1" stroke-dasharray="2.6 1.5"/>
<circle cx="488.4" cy="52.7" r="1.9" fill="#ff0000"/>
<text x="497.90" y="38.90" font-size="5.8" text-anchor="start" textLength="38.8" lengthAdjust="spacingAndGlyphs" fill="#222" stroke="#222" stroke-width="0.08">Data_Processed</text>
<text x="497.90" y="46.80" font-size="5.8" text-anchor="start" textLength="23.6" lengthAdjust="spacingAndGlyphs" fill="#222" stroke="#222" stroke-width="0.08">Start Line</text>
<text x="497.90" y="54.70" font-size="5.8" text-anchor="start" textLength="36.1" lengthAdjust="spacingAndGlyphs" fill="#222" stroke="#222" stroke-width="0.08">Peaks_Original</text>
</g>
<g transform="translate(0,160.5)">
<line x1="196.9" x2="541.75" y1="34.50" y2="34.50" stroke="#dadada" stroke-width="0.7"/>
<line x1="195.0" x2="196.9" y1="34.50" y2="34.50" stroke="#333" stroke-width="0.7"/>
<text x="192.80" y="36.50" font-size="5.6" text-anchor="end" textLength="11.7" lengthAdjust="spacingAndGlyphs" fill="#222" stroke="#222" stroke-width="0.08">1500</text>
<line x1="196.9" x2="541.75" y1="59.42" y2="59.42" stroke="#dadada" stroke-width="0.7"/>
<line x1="195.0" x2="196.9" y1="59.42" y2="59.42" stroke="#333" stroke-width="0.7"/>
<text x="192.80" y="61.42" font-size="5.6" text-anchor="end" textLength="11.7" lengthAdjust="spacingAndGlyphs" fill="#222" stroke="#222" stroke-width="0.08">1000</text>
<line x1="196.9" x2="541.75" y1="84.34" y2="84.34" stroke="#dadada" stroke-width="0.7"/>
<line x1="195.0" x2="196.9" y1="84.34" y2="84.34" stroke="#333" stroke-width="0.7"/>
<text x="192.80" y="86.34" font-size="5.6" text-anchor="end" textLength="8.8" lengthAdjust="spacingAndGlyphs" fill="#222" stroke="#222" stroke-width="0.08">500</text>
<line x1="196.9" x2="541.75" y1="109.25" y2="109.25" stroke="#dadada" stroke-width="0.7"/>
<line x1="195.0" x2="196.9" y1="109.25" y2="109.25" stroke="#333" stroke-width="0.7"/>
<text x="192.80" y="111.25" font-size="5.6" text-anchor="end" textLength="3.1" lengthAdjust="spacingAndGlyphs" fill="#222" stroke="#222" stroke-width="0.08">0</text>
<line x1="196.9" x2="541.75" y1="134.16" y2="134.16" stroke="#dadada" stroke-width="0.7"/>
<line x1="195.0" x2="196.9" y1="134.16" y2="134.16" stroke="#333" stroke-width="0.7"/>
<text x="192.80" y="136.16" font-size="5.6" text-anchor="end" textLength="12.6" lengthAdjust="spacingAndGlyphs" fill="#222" stroke="#222" stroke-width="0.08">−500</text>
<line x1="196.9" x2="541.75" y1="159.08" y2="159.08" stroke="#dadada" stroke-width="0.7"/>
<line x1="195.0" x2="196.9" y1="159.08" y2="159.08" stroke="#333" stroke-width="0.7"/>
<text x="192.80" y="161.08" font-size="5.6" text-anchor="end" textLength="15.9" lengthAdjust="spacingAndGlyphs" fill="#222" stroke="#222" stroke-width="0.08">−1000</text>
<line x1="196.9" x2="541.75" y1="184.00" y2="184.00" stroke="#dadada" stroke-width="0.7"/>
<line x1="195.0" x2="196.9" y1="184.00" y2="184.00" stroke="#333" stroke-width="0.7"/>
<text x="192.80" y="186.00" font-size="5.6" text-anchor="end" textLength="15.9" lengthAdjust="spacingAndGlyphs" fill="#222" stroke="#222" stroke-width="0.08">−1500</text>
<line x1="212.50" x2="212.50" y1="30.099999999999994" y2="190.7" stroke="#dadada" stroke-width="0.7"/>
<line x1="212.50" x2="212.50" y1="190.7" y2="192.6" stroke="#333" stroke-width="0.7"/>
<text x="212.50" y="198.60" font-size="5.6" text-anchor="middle" textLength="3.1" lengthAdjust="spacingAndGlyphs" fill="#222" stroke="#222" stroke-width="0.08">0</text>
<line x1="260.00" x2="260.00" y1="30.099999999999994" y2="190.7" stroke="#dadada" stroke-width="0.7"/>
<line x1="260.00" x2="260.00" y1="190.7" y2="192.6" stroke="#333" stroke-width="0.7"/>
<text x="260.00" y="198.60" font-size="5.6" text-anchor="middle" textLength="21.8" lengthAdjust="spacingAndGlyphs" fill="#222" stroke="#222" stroke-width="0.08">5000000</text>
<line x1="307.50" x2="307.50" y1="30.099999999999994" y2="190.7" stroke="#dadada" stroke-width="0.7"/>
<line x1="307.50" x2="307.50" y1="190.7" y2="192.6" stroke="#333" stroke-width="0.7"/>
<text x="307.50" y="198.60" font-size="5.6" text-anchor="middle" textLength="25.0" lengthAdjust="spacingAndGlyphs" fill="#222" stroke="#222" stroke-width="0.08">10000000</text>
<line x1="355.00" x2="355.00" y1="30.099999999999994" y2="190.7" stroke="#dadada" stroke-width="0.7"/>
<line x1="355.00" x2="355.00" y1="190.7" y2="192.6" stroke="#333" stroke-width="0.7"/>
<text x="355.00" y="198.60" font-size="5.6" text-anchor="middle" textLength="25.0" lengthAdjust="spacingAndGlyphs" fill="#222" stroke="#222" stroke-width="0.08">15000000</text>
<line x1="402.50" x2="402.50" y1="30.099999999999994" y2="190.7" stroke="#dadada" stroke-width="0.7"/>
<line x1="402.50" x2="402.50" y1="190.7" y2="192.6" stroke="#333" stroke-width="0.7"/>
<text x="402.50" y="198.60" font-size="5.6" text-anchor="middle" textLength="25.0" lengthAdjust="spacingAndGlyphs" fill="#222" stroke="#222" stroke-width="0.08">20000000</text>
<line x1="450.00" x2="450.00" y1="30.099999999999994" y2="190.7" stroke="#dadada" stroke-width="0.7"/>
<line x1="450.00" x2="450.00" y1="190.7" y2="192.6" stroke="#333" stroke-width="0.7"/>
<text x="450.00" y="198.60" font-size="5.6" text-anchor="middle" textLength="25.0" lengthAdjust="spacingAndGlyphs" fill="#222" stroke="#222" stroke-width="0.08">25000000</text>
<line x1="497.50" x2="497.50" y1="30.099999999999994" y2="190.7" stroke="#dadada" stroke-width="0.7"/>
<line x1="497.50" x2="497.50" y1="190.7" y2="192.6" stroke="#333" stroke-width="0.7"/>
<text x="497.50" y="198.60" font-size="5.6" text-anchor="middle" textLength="25.0" lengthAdjust="spacingAndGlyphs" fill="#222" stroke="#222" stroke-width="0.08">30000000</text>
<path d="M212.50 105.11V112.52M213.30 104.54V112.41M214.10 105.04V112.55M214.90 105.43V112.46M215.70 104.89V112.80M216.50 105.54V112.21M217.30 105.54V112.82M218.10 104.82V111.90M218.90 104.47V113.01M219.70 104.87V112.59M220.50 105.46V111.87M221.30 105.02V111.92M222.10 105.42V112.14M222.90 105.61V112.41M223.70 105.12V112.86M224.50 105.03V112.62M225.30 105.05V112.64M226.10 105.10V112.18M226.90 104.45V113.04M227.70 104.64V112.70M228.50 105.27V112.13M229.30 105.30V111.93M230.10 104.73V112.33M230.90 104.63V112.31M231.70 104.50V112.87M232.50 105.65V112.10M233.30 104.56V112.41M234.10 104.47V112.33M234.90 105.56V112.61M235.70 104.72V112.17M236.50 105.55V112.25M237.30 104.49V112.76M238.10 105.51V112.15M238.90 105.53V111.92M239.70 104.69V112.06M240.50 104.98V112.39M241.30 105.42V112.73M242.10 105.49V112.62M242.90 105.51V112.35M243.70 105.39V112.17M244.50 104.48V112.81M245.30 105.29V112.91M246.10 105.40V112.32M246.90 104.62V112.62M247.70 105.53V113.04M248.50 105.39V112.16M249.30 104.72V112.24M250.10 105.29V111.94M250.90 105.54V112.55M251.70 105.36V112.57M252.50 105.20V112.39M253.30 104.50V112.43M254.10 104.96V112.89M254.90 105.43V112.03M255.70 104.56V112.83M256.50 105.35V112.08M257.30 104.76V112.98M258.10 105.41V112.99M258.90 104.59V112.57M259.70 105.14V111.97M260.50 105.60V113.01M261.30 105.36V112.70M262.10 105.34V112.84M262.90 104.93V112.20M263.70 105.44V112.71M264.50 105.57V112.12M265.30 104.98V112.87M266.10 104.91V112.19M266.90 104.55V112.09M267.70 105.63V112.17M268.50 105.12V111.92M269.30 105.44V112.29M270.10 104.96V112.01M270.90 105.22V112.92M271.70 104.47V112.64M272.50 104.82V112.55M273.30 105.48V111.89M274.10 105.63V112.94M274.90 104.81V113.01M275.70 105.62V112.61M276.50 105.07V112.73M277.30 105.27V113.05M278.10 105.56V112.51M278.90 104.77V112.93M279.70 104.77V112.69M280.50 104.70V112.95M281.30 105.23V112.67M282.10 104.57V112.90M282.90 105.15V112.80M283.70 104.61V112.54M284.50 104.90V112.31M285.30 104.95V112.58M286.10 105.55V112.62M286.90 104.46V112.91M287.70 104.78V112.32M288.50 104.77V112.55M289.30 105.12V112.86M290.10 105.55V112.75M290.90 105.61V112.57M291.70 105.07V112.13M292.50 104.81V112.45M293.30 104.91V112.95M294.10 105.34V111.86M294.90 105.29V112.66M295.70 105.41V112.05M296.50 104.56V112.64M297.30 105.12V112.92M298.10 105.26V112.65M298.90 105.41V112.37M299.70 104.68V112.95M300.50 104.59V112.31M301.30 104.95V112.23M302.10 105.49V112.45M302.90 104.65V112.87M303.70 104.80V112.99M304.50 105.32V112.05M305.30 105.11V112.18M306.10 105.39V112.35M306.90 104.90V112.44M307.70 105.27V112.86M308.50 104.47V112.39M309.30 105.56V111.89M310.10 104.60V111.90M310.90 104.80V112.53M311.70 105.28V112.80M312.50 105.63V112.01M313.30 105.10V111.88M314.10 104.65V112.13M314.90 105.48V111.91M315.70 104.89V112.39M316.50 104.89V112.64M317.30 104.68V113.00M318.10 104.83V112.09M318.90 105.08V112.06M319.70 105.64V112.42M320.50 104.79V112.06M321.30 105.32V112.26M322.10 104.81V112.47M322.90 104.91V112.76M323.70 105.18V112.80M324.50 104.56V111.95M325.30 104.53V112.72M326.10 105.49V112.39M326.90 104.90V112.94M327.70 105.20V112.53M328.50 104.59V112.81M329.30 104.52V112.41M330.10 104.87V112.10M330.90 104.78V112.83M331.70 104.88V112.71M332.50 105.39V112.93M333.30 104.47V113.02M334.10 105.01V112.80M334.90 105.27V112.94M335.70 104.62V112.27M336.50 105.55V112.38M337.30 104.99V112.77M338.10 105.07V111.88M338.90 104.68V111.93M339.70 104.69V112.06M340.50 105.25V112.80M341.30 105.48V112.03M342.10 105.03V112.72M342.90 104.64V112.68M343.70 104.52V112.44M344.50 104.51V111.95M345.30 105.38V112.48M346.10 105.30V112.72M346.90 104.88V112.48M347.70 104.64V112.52M348.50 105.28V112.31M349.30 104.64V112.93M350.10 105.40V112.87M350.90 104.49V112.48M351.70 104.96V112.09M352.50 105.01V112.45M353.30 104.92V111.88M354.10 104.49V112.47M354.90 105.17V112.81M355.70 104.97V112.44M356.50 104.82V111.93M357.30 105.00V112.35M358.10 104.50V112.96M358.90 105.33V112.42M359.70 105.50V112.37M360.50 104.67V114.12M361.30 105.27V113.62M362.10 104.54V113.95M362.90 105.62V112.65M363.70 104.83V113.12M364.50 104.91V113.80M365.30 105.50V113.09M366.10 105.41V113.58M366.90 105.20V113.67M367.70 105.46V113.67M368.50 104.88V114.61M369.30 104.92V113.46M370.10 104.76V115.08M370.90 105.27V114.53M371.70 105.39V115.27M372.50 105.49V113.95M373.30 105.34V114.05M374.10 105.14V113.11M374.90 105.17V112.72M375.70 105.41V114.95M376.50 104.49V113.25M377.30 104.74V114.17M378.10 105.42V112.20M378.90 105.61V113.80M379.70 104.97V112.49M380.50 105.41V115.33M381.30 104.54V112.12M382.10 104.51V114.32M382.90 105.26V113.70M383.70 105.13V112.60M384.50 104.81V113.32M385.30 105.11V113.75M386.10 105.42V113.33M386.90 105.63V114.93M387.70 104.80V114.46M388.50 105.16V113.83M389.30 104.47V113.46M390.10 104.56V114.69M390.90 104.67V114.58M391.70 104.59V114.60M392.50 104.73V112.34M393.30 104.78V111.93M394.10 105.24V112.41M394.90 105.64V112.28M395.70 104.88V112.60M396.50 105.37V112.98M397.30 104.85V112.26M398.10 104.86V112.53M398.90 105.01V112.32M399.70 104.45V112.62M400.50 104.81V112.76M401.30 104.47V111.88M402.10 104.91V112.74M402.90 105.34V112.33M403.70 105.59V112.08M404.50 105.20V111.97M405.30 105.35V112.94M406.10 104.99V112.46M406.90 104.49V112.53M407.70 104.46V112.62M408.50 104.68V111.94M409.30 104.93V112.76M410.10 105.60V112.97M410.90 105.46V112.42M411.70 105.45V112.44M412.50 104.92V111.92M413.30 104.52V112.35M414.10 105.02V112.57M414.90 105.21V112.19M415.70 104.86V112.52M416.50 105.31V112.71M417.30 105.29V111.87M418.10 105.36V111.90M418.90 105.46V112.76M419.70 105.18V112.93M420.50 104.75V111.91M421.30 104.46V112.98M422.10 105.56V112.94M422.90 105.13V112.42M423.70 104.48V112.14M424.50 105.02V112.97M425.30 104.78V112.41M426.10 104.48V112.83M426.90 104.93V111.99M427.70 104.90V112.40M428.50 105.41V113.23M429.30 105.50V114.05M430.10 105.10V113.62M430.90 105.15V114.11M431.70 104.45V114.83M432.50 105.36V114.22M433.30 104.71V113.50M434.10 105.32V114.08M434.90 104.94V114.49M435.70 105.42V114.60M436.50 104.55V113.00M437.30 105.58V113.24M438.10 104.90V113.33M438.90 105.56V113.64M439.70 104.99V113.54M440.50 105.08V112.96M441.30 104.76V113.04M442.10 105.51V114.38M442.90 104.73V113.17M443.70 105.34V113.74M444.50 104.87V113.85M445.30 104.99V112.75M446.10 104.55V112.36M446.90 105.21V111.97M447.70 104.60V111.94M448.50 105.55V112.53M449.30 105.07V112.67M450.10 105.29V112.78M450.90 105.56V112.11M451.70 104.86V111.95M452.50 105.29V112.72M453.30 104.82V112.19M454.10 105.48V112.28M454.90 104.78V112.29M455.70 105.51V112.70M456.50 104.97V112.95M457.30 104.52V112.95M458.10 105.12V112.81M458.90 105.28V112.23M459.70 105.17V112.97M460.50 104.58V112.15M461.30 105.22V112.29M462.10 105.21V112.32M462.90 105.18V112.08M463.70 104.97V112.81M464.50 105.00V112.85M465.30 104.97V112.06M466.10 104.74V112.91M466.90 105.31V111.88M467.70 105.03V112.50M468.50 104.97V113.01M469.30 104.87V112.82M470.10 105.57V112.51M470.90 104.70V111.95M471.70 105.55V112.73M472.50 104.57V111.95M473.30 104.89V112.02M474.10 104.76V112.63M474.90 105.36V112.11M475.70 104.73V112.48M476.50 104.73V112.32M477.30 105.24V113.01M478.10 104.84V112.44M478.90 105.01V112.72M479.70 104.80V112.95M480.50 105.16V112.84M481.30 104.85V112.87M482.10 104.68V112.85M482.90 104.58V113.00M483.70 104.88V112.48M484.50 104.80V112.81M485.30 105.14V112.35M486.10 105.47V115.22M486.90 105.20V112.56M487.70 105.14V114.62M488.50 105.58V112.51M489.30 104.87V113.23M490.10 105.58V113.86M490.90 104.56V112.17M491.70 105.43V112.70M492.50 104.79V113.12M493.30 105.43V112.62M494.10 104.74V113.59M494.90 104.67V113.08M495.70 104.59V113.80M496.50 104.99V114.20M497.30 105.38V114.28M498.10 104.69V113.63M498.90 105.03V114.66M499.70 104.86V112.16M500.50 105.08V114.29M501.30 104.79V112.97M502.10 105.46V112.88M502.90 104.61V114.06M503.70 104.46V113.51M504.50 105.47V112.78M505.30 104.66V114.92M506.10 105.55V113.97M506.90 105.53V113.60M507.70 104.50V114.70M508.50 105.29V113.84M509.30 104.55V114.02M510.10 105.40V113.82M510.90 105.46V113.63M511.70 105.28V112.71M512.50 105.09V112.71M513.30 105.22V112.67M514.10 105.52V112.32M514.90 105.10V113.01M515.70 104.65V112.63M516.50 105.64V112.30M517.30 104.80V112.13M518.10 104.97V112.40M518.90 105.64V113.04M519.70 104.69V112.10M520.50 104.91V112.20M521.30 105.20V112.50M522.10 105.29V112.25M522.90 105.18V112.65M523.70 105.34V112.09M524.50 104.77V112.25M525.30 104.52V112.53M526.10 104.78V112.25M212.60 104.65V113.52M214.10 98.30V113.55M215.60 103.27V121.99M217.10 98.66V117.78M218.60 104.74V120.40M220.10 97.83V115.37M221.60 98.45V113.96M223.10 100.76V113.25M224.60 105.52V118.12M293.50 101.24V118.56M294.10 103.86V120.26M294.70 99.96V115.48M295.30 100.22V112.40M295.90 100.11V119.07M296.50 106.06V119.95M297.10 102.77V118.18M297.70 96.19V115.48M298.30 99.51V118.59M455.50 97.09V126.50M456.00 101.22V142.02M456.50 104.46V135.33M457.00 97.62V141.19M457.50 105.26V132.95M458.00 99.61V131.14M458.50 97.45V139.18M459.00 106.11V131.73M459.50 103.33V143.79M460.00 98.02V147.92M460.50 102.43V119.72M470.00 96.85V119.04M470.60 101.91V131.59M471.20 99.37V138.03M471.80 99.70V125.10M472.40 97.27V139.27M473.00 97.39V137.34M473.60 101.57V127.81M474.20 101.74V119.59M474.80 105.32V139.78M475.40 104.38V128.94M476.00 97.26V135.13M476.60 98.96V137.14M477.20 98.47V128.17M477.80 104.52V117.40M461.00 103.88V112.99M461.90 101.17V114.01M462.80 106.18V121.41M463.70 104.46V115.25M464.60 104.52V119.44M465.50 103.00V118.02M466.40 105.22V112.41M467.30 102.05V116.81M468.20 101.75V116.02M469.10 103.99V113.94M470.00 103.73V114.82M511.50 101.39V124.79M511.85 102.22V113.68M512.20 102.55V117.71M512.55 105.79V134.90M512.90 100.29V127.78M513.25 102.02V138.27M513.60 103.53V140.63M513.95 100.47V149.80M514.30 104.43V144.53M514.65 99.60V128.63M515.00 101.37V146.42M515.35 100.92V132.07M515.70 99.86V146.39M516.05 98.61V114.31M516.40 103.16V146.23M516.75 103.24V134.81M517.10 103.46V123.75M517.45 101.68V114.88M517.80 96.40V129.12M518.15 100.65V127.23M518.50 95.58V138.48M518.85 100.92V121.28M519.20 98.45V127.18M519.55 97.65V114.83M519.90 105.25V148.73M520.25 102.49V144.96M520.60 99.74V142.65M520.95 97.50V140.44M521.30 101.38V146.35M521.65 96.11V142.16M522.00 96.39V132.54M522.35 105.70V112.27M383.00 103.04V113.07M384.00 103.38V112.42M385.00 105.80V114.49M386.00 103.69V113.23M387.00 104.49V112.38M388.00 102.13V114.72M389.00 103.31V113.62M390.00 105.97V114.94M391.00 104.01V112.82M392.00 103.26V114.79M393.00 105.81V112.79M394.00 105.56V113.22M395.00 104.01V112.72M399.00 105.74V114.99M400.00 102.86V113.99M401.00 102.81V114.67M402.00 102.21V112.54M403.00 105.08V113.11M404.00 105.83V114.64M405.00 105.03V112.62M406.00 104.96V114.83M407.00 103.89V112.47M408.00 102.95V113.09M409.00 105.02V112.79M213.50 109.25V96.08M217.50 109.25V89.26M220.50 109.25V95.04M224.50 109.25V125.89M228.50 109.25V118.53M232.50 109.25V121.28M237.50 109.25V118.73M246.50 109.25V122.54M252.50 109.25V95.67M268.50 109.25V94.52M272.50 109.25V118.14M285.50 109.25V114.77M288.50 109.25V117.67M291.50 109.25V122.32M297.50 109.25V116.36M302.50 109.25V119.14M306.50 109.25V115.80M314.50 109.25V117.36M327.50 109.25V99.84M329.50 109.25V116.23M331.50 109.25V92.29M334.50 109.25V115.78M341.50 109.25V98.88M344.50 109.25V98.22M346.50 109.25V95.30M352.50 109.25V121.68M356.50 109.25V116.72M359.50 109.25V115.29M362.50 109.25V97.78M368.50 109.25V101.52M370.50 109.25V113.44M372.50 109.25V93.01M375.50 109.25V100.71M383.50 109.25V117.09M387.50 109.25V120.96M388.50 109.25V115.63M392.50 109.25V117.49M400.50 109.25V115.30M403.50 109.25V98.38M405.50 109.25V116.70M407.50 109.25V119.55M418.50 109.25V95.36M426.50 109.25V117.17M429.50 109.25V118.22M431.50 109.25V118.00M434.50 109.25V114.18M437.50 109.25V96.42M442.50 109.25V116.89M444.50 109.25V118.21M447.50 109.25V115.78M453.50 109.25V119.93M460.50 109.25V90.63M467.50 109.25V122.30M476.50 109.25V123.76M480.50 109.25V99.97M482.50 109.25V118.69M498.50 109.25V122.11M509.50 109.25V119.47M512.50 109.25V95.28M515.50 109.25V119.64M519.50 109.25V116.75M523.50 109.25V97.73M214.50 71.00V109.25M215.50 59.80V109.25M217.50 56.70V109.25M218.50 47.50V109.25M222.50 65.00V109.25M224.50 70.00V109.25M239.50 66.00V109.25M241.50 71.00V109.25M246.50 55.00V109.25M248.50 81.30V109.25M257.50 89.50V109.25M261.50 94.70V109.25M265.50 41.30V109.25M269.50 95.30V109.25M271.50 98.80V109.25M276.50 93.60V109.25M279.50 83.00V109.25M283.50 72.00V109.25M286.50 77.20V109.25M290.50 90.60V109.25M294.50 87.50V109.25M295.50 79.30V109.25M296.50 78.30V109.25M298.50 91.60V109.25M301.50 75.60V109.25M304.50 61.80V109.25M319.50 93.20V109.25M330.50 69.60V109.25M333.50 90.60V109.25M338.50 77.20V109.25M340.50 89.10V109.25M344.50 76.20V109.25M348.50 98.20V109.25M361.50 92.00V109.25M371.50 52.60V109.25M371.50 66.00V109.25M383.50 75.20V109.25M384.50 76.80V109.25M388.50 49.10V109.25M391.50 74.20V109.25M393.50 77.20V109.25M394.50 63.90V109.25M399.50 69.00V109.25M402.50 52.60V109.25M407.50 59.20V109.25M408.50 78.30V109.25M420.50 85.00V109.25M425.50 92.60V109.25M431.50 78.90V109.25M441.50 80.30V109.25M444.50 82.40V109.25M456.50 47.50V109.25M457.50 52.60V109.25M459.50 37.20V109.25M460.50 86.50V109.25M462.50 47.50V109.25M465.50 85.40V109.25M466.50 83.80V109.25M472.50 66.00V109.25M474.50 61.80V109.25M475.50 55.70V109.25M481.50 56.70V109.25M485.50 57.70V109.25M498.50 78.30V109.25M500.50 89.50V109.25M512.50 80.30V109.25M513.50 57.70V109.25M515.50 61.80V109.25M516.50 69.00V109.25M518.50 61.80V109.25M521.50 73.10V109.25M525.50 98.80V109.25M213.50 80.00V109.25M216.50 64.00V109.25M220.50 75.00V109.25M223.50 82.00V109.25M459.50 70.00V109.25M473.50 75.00V109.25M514.50 66.00V109.25M519.50 70.00V109.25M214.50 109.25V155.20M216.50 109.25V144.00M219.50 109.25V162.00M221.50 109.25V148.40M224.50 109.25V178.80M239.50 109.25V142.80M241.50 109.25V150.00M246.50 109.25V181.00M257.50 109.25V128.00M262.50 109.25V122.50M265.50 109.25V167.60M269.50 109.25V120.00M271.50 109.25V118.00M279.50 109.25V135.00M283.50 109.25V139.40M286.50 109.25V150.70M290.50 109.25V129.30M294.50 109.25V141.70M295.50 109.25V145.00M296.50 109.25V136.00M301.50 109.25V147.30M304.50 109.25V151.80M319.50 109.25V123.60M330.50 109.25V140.50M333.50 109.25V128.20M338.50 109.25V146.20M340.50 109.25V129.30M344.50 109.25V136.00M348.50 109.25V118.00M358.50 109.25V114.60M361.50 109.25V123.60M371.50 109.25V154.00M383.50 109.25V139.40M388.50 109.25V150.70M392.50 109.25V138.30M394.50 109.25V151.80M400.50 109.25V154.00M402.50 109.25V168.70M407.50 109.25V148.40M420.50 109.25V129.30M425.50 109.25V125.90M431.50 109.25V134.90M431.50 109.25V141.70M440.50 109.25V147.30M444.50 109.25V131.50M456.50 109.25V154.00M458.50 109.25V178.80M462.50 109.25V183.30M465.50 109.25V138.30M472.50 109.25V160.80M475.50 109.25V145.00M476.50 109.25V158.60M481.50 109.25V173.20M485.50 109.25V180.00M498.50 109.25V141.70M501.50 109.25V131.50M513.50 109.25V147.30M514.50 109.25V178.80M517.50 109.25V158.60M520.50 109.25V153.00M525.50 109.25V113.50M213.50 109.25V140.00M217.50 109.25V150.00M220.50 109.25V130.00M223.50 109.25V155.00M457.50 109.25V140.00M461.50 109.25V150.00M464.50 109.25V125.00M470.50 109.25V135.00M477.50 109.25V130.00M512.50 109.25V135.00M516.50 109.25V150.00M518.50 109.25V140.00M521.50 109.25V132.00" stroke="#0000ff" stroke-width="1.1" fill="none"/>
<line x1="212.5" x2="212.5" y1="30.099999999999994" y2="190.7" stroke="#111" stroke-width="1.05" stroke-dasharray="2.3 1.2"/>
<path d="M211.00 105.91 L212.00 105.28 L213.00 105.66 L214.00 105.45 L215.00 105.14 L216.00 104.99 L217.00 105.50 L218.00 104.67 L219.00 103.81 L220.00 103.23 L221.00 102.52 L222.00 103.25 L223.00 103.56 L224.00 104.35 L225.00 105.49 L226.00 104.46 L227.00 104.53 L228.00 104.45 L229.00 104.50 L230.00 104.88 L231.00 104.87 L232.00 105.61 L233.00 104.68 L234.00 104.84 L235.00 105.15 L236.00 105.19 L237.00 105.27 L238.00 104.83 L239.00 104.19 L240.00 103.46 L241.00 104.23 L242.00 104.11 L243.00 104.51 L244.00 104.22 L245.00 103.90 L246.00 103.76 L247.00 103.51 L248.00 103.86 L249.00 104.69 L250.00 105.05 L251.00 105.35 L252.00 105.17 L253.00 105.43 L254.00 106.00 L255.00 105.91 L256.00 105.59 L257.00 105.58 L258.00 105.69 L259.00 105.74 L260.00 105.96 L261.00 105.99 L262.00 105.08 L263.00 103.64 L264.00 104.62 L265.00 105.35 L266.00 105.83 L267.00 105.66 L268.00 105.45 L269.00 105.20 L270.00 105.74 L271.00 105.39 L272.00 105.57 L273.00 105.23 L274.00 104.30 L275.00 104.11 L276.00 103.90 L277.00 103.42 L278.00 103.62 L279.00 103.96 L280.00 104.22 L281.00 104.35 L282.00 104.35 L283.00 104.04 L284.00 104.58 L285.00 104.31 L286.00 104.37 L287.00 104.01 L288.00 104.50 L289.00 104.92 L290.00 105.53 L291.00 105.51 L292.00 105.91 L293.00 105.56 L294.00 104.75 L295.00 104.19 L296.00 104.77 L297.00 104.79 L298.00 105.02 L299.00 105.77 L300.00 105.41 L301.00 105.55 L302.00 105.10 L303.00 105.15 L304.00 104.91 L305.00 105.30 L306.00 104.79 L307.00 104.81 L308.00 105.46 L309.00 105.02 L310.00 104.87 L311.00 104.91 L312.00 105.08 L313.00 104.73 L314.00 104.93 L315.00 104.98 L316.00 104.28 L317.00 104.98 L318.00 104.32 L319.00 104.63 L320.00 104.75 L321.00 105.30 L322.00 104.83 L323.00 104.81 L324.00 104.55 L325.00 104.11 L326.00 103.39 L327.00 103.72 L328.00 104.19 L329.00 104.17 L330.00 103.25 L331.00 103.52 L332.00 104.40 L333.00 104.52 L334.00 105.08 L335.00 104.75 L336.00 104.87 L337.00 104.11 L338.00 104.30 L339.00 105.03 L340.00 105.03 L341.00 105.03 L342.00 105.64 L343.00 105.57 L344.00 105.99 L345.00 105.74 L346.00 105.79 L347.00 105.77 L348.00 105.31 L349.00 105.52 L350.00 105.49 L351.00 105.79 L352.00 105.39 L353.00 105.63 L354.00 105.38 L355.00 105.64 L356.00 105.44 L357.00 105.33 L358.00 104.88 L359.00 105.16 L360.00 105.72 L361.00 105.87 L362.00 105.62 L363.00 105.96 L364.00 105.79 L365.00 105.71 L366.00 105.41 L367.00 104.40 L368.00 105.12 L369.00 105.29 L370.00 105.21 L371.00 104.92 L372.00 105.19 L373.00 105.54 L374.00 105.39 L375.00 104.70 L376.00 104.52 L377.00 104.00 L378.00 103.98 L379.00 104.23 L380.00 104.17 L381.00 105.08 L382.00 105.15 L383.00 105.61 L384.00 105.54 L385.00 105.66 L386.00 105.74 L387.00 105.55 L388.00 105.52 L389.00 105.72 L390.00 105.54 L391.00 104.45 L392.00 104.16 L393.00 104.07 L394.00 104.04 L395.00 104.14 L396.00 104.91 L397.00 104.96 L398.00 105.18 L399.00 105.16 L400.00 105.75 L401.00 105.82 L402.00 105.87 L403.00 105.84 L404.00 105.63 L405.00 105.90 L406.00 105.84 L407.00 105.55 L408.00 105.67 L409.00 105.85 L410.00 105.66 L411.00 105.70 L412.00 105.36 L413.00 105.51 L414.00 105.47 L415.00 105.34 L416.00 105.62 L417.00 105.62 L418.00 105.30 L419.00 104.97 L420.00 104.77 L421.00 104.99 L422.00 104.91 L423.00 104.41 L424.00 105.40 L425.00 105.11 L426.00 105.39 L427.00 105.18 L428.00 105.58 L429.00 105.29 L430.00 104.79 L431.00 104.48 L432.00 104.74 L433.00 104.64 L434.00 105.12 L435.00 104.83 L436.00 105.28 L437.00 105.19 L438.00 105.12 L439.00 105.40 L440.00 105.39 L441.00 105.54 L442.00 105.88 L443.00 105.67 L444.00 105.58 L445.00 105.37 L446.00 105.52 L447.00 105.46 L448.00 105.64 L449.00 105.58 L450.00 105.19 L451.00 105.77 L452.00 105.67 L453.00 105.21 L454.00 105.08 L455.00 104.75 L456.00 104.63 L457.00 103.86 L458.00 103.69 L459.00 104.10 L460.00 104.07 L461.00 104.81 L462.00 105.39 L463.00 105.23 L464.00 105.87 L465.00 105.62 L466.00 105.59 L467.00 105.26 L468.00 105.23 L469.00 104.36 L470.00 104.31 L471.00 103.97 L472.00 104.28 L473.00 104.77 L474.00 103.99 L475.00 104.27 L476.00 104.06 L477.00 104.26 L478.00 104.67 L479.00 104.31 L480.00 105.32 L481.00 104.99 L482.00 105.14 L483.00 105.94 L484.00 105.85 L485.00 105.59 L486.00 105.89 L487.00 105.91 L488.00 105.32 L489.00 105.56 L490.00 105.95 L491.00 105.78 L492.00 105.85 L493.00 105.82 L494.00 105.71 L495.00 105.54 L496.00 105.54 L497.00 105.66 L498.00 105.70 L499.00 105.54 L500.00 105.54 L501.00 104.94 L502.00 104.71 L503.00 105.36 L504.00 104.98 L505.00 105.87 L506.00 105.80 L507.00 105.73 L508.00 105.98 L509.00 105.29 L510.00 104.84 L511.00 104.17 L512.00 104.60 L513.00 104.46 L514.00 104.02 L515.00 103.41 L516.00 103.97 L517.00 103.53 L518.00 103.69 L519.00 104.61 L520.00 104.43 L521.00 104.05 L522.00 103.45 L523.00 103.41 L524.00 103.74 L525.00 104.63 L526.00 104.07 L527.00 104.26 L527.00 110.48 L526.00 110.53 L525.00 110.46 L524.00 110.60 L523.00 110.64 L522.00 110.53 L521.00 110.55 L520.00 110.18 L519.00 110.17 L518.00 110.26 L517.00 110.35 L516.00 110.55 L515.00 110.22 L514.00 110.34 L513.00 110.34 L512.00 110.62 L511.00 110.38 L510.00 110.31 L509.00 110.35 L508.00 110.59 L507.00 110.20 L506.00 110.53 L505.00 110.55 L504.00 110.19 L503.00 110.53 L502.00 110.10 L501.00 110.32 L500.00 110.22 L499.00 110.63 L498.00 110.43 L497.00 110.34 L496.00 110.35 L495.00 110.10 L494.00 110.33 L493.00 110.43 L492.00 110.39 L491.00 110.21 L490.00 110.35 L489.00 110.05 L488.00 110.28 L487.00 110.36 L486.00 110.60 L485.00 110.35 L484.00 110.39 L483.00 110.26 L482.00 110.46 L481.00 110.11 L480.00 110.22 L479.00 110.62 L478.00 110.14 L477.00 110.40 L476.00 110.19 L475.00 110.48 L474.00 110.15 L473.00 110.22 L472.00 110.64 L471.00 110.36 L470.00 110.15 L469.00 110.58 L468.00 110.56 L467.00 110.61 L466.00 110.19 L465.00 110.60 L464.00 110.25 L463.00 110.33 L462.00 110.37 L461.00 110.30 L460.00 110.40 L459.00 110.58 L458.00 110.26 L457.00 110.24 L456.00 110.42 L455.00 110.33 L454.00 110.27 L453.00 110.42 L452.00 110.21 L451.00 110.07 L450.00 110.23 L449.00 110.06 L448.00 110.16 L447.00 110.33 L446.00 110.44 L445.00 110.35 L444.00 110.53 L443.00 110.18 L442.00 110.06 L441.00 110.18 L440.00 110.49 L439.00 110.15 L438.00 110.15 L437.00 110.08 L436.00 110.29 L435.00 110.51 L434.00 110.06 L433.00 110.64 L432.00 110.62 L431.00 110.16 L430.00 110.33 L429.00 110.56 L428.00 110.41 L427.00 110.33 L426.00 110.63 L425.00 110.53 L424.00 110.23 L423.00 110.39 L422.00 110.25 L421.00 110.15 L420.00 110.35 L419.00 110.60 L418.00 110.51 L417.00 110.24 L416.00 110.10 L415.00 110.18 L414.00 110.10 L413.00 110.62 L412.00 110.37 L411.00 110.51 L410.00 110.39 L409.00 110.37 L408.00 110.37 L407.00 110.12 L406.00 110.16 L405.00 110.23 L404.00 110.08 L403.00 110.26 L402.00 110.16 L401.00 110.09 L400.00 110.61 L399.00 110.21 L398.00 110.12 L397.00 110.27 L396.00 110.32 L395.00 110.62 L394.00 110.49 L393.00 110.58 L392.00 110.46 L391.00 110.13 L390.00 110.17 L389.00 110.62 L388.00 110.48 L387.00 110.14 L386.00 110.61 L385.00 110.26 L384.00 110.61 L383.00 110.63 L382.00 110.58 L381.00 110.17 L380.00 110.14 L379.00 110.60 L378.00 110.09 L377.00 110.28 L376.00 110.35 L375.00 110.06 L374.00 110.54 L373.00 110.34 L372.00 110.49 L371.00 110.41 L370.00 110.22 L369.00 110.28 L368.00 110.52 L367.00 110.25 L366.00 110.52 L365.00 110.52 L364.00 110.13 L363.00 110.28 L362.00 110.64 L361.00 110.60 L360.00 110.26 L359.00 110.27 L358.00 110.64 L357.00 110.30 L356.00 110.18 L355.00 110.20 L354.00 110.51 L353.00 110.10 L352.00 110.37 L351.00 110.52 L350.00 110.45 L349.00 110.49 L348.00 110.25 L347.00 110.23 L346.00 110.19 L345.00 110.16 L344.00 110.58 L343.00 110.20 L342.00 110.36 L341.00 110.21 L340.00 110.44 L339.00 110.19 L338.00 110.25 L337.00 110.52 L336.00 110.34 L335.00 110.20 L334.00 110.14 L333.00 110.16 L332.00 110.58 L331.00 110.19 L330.00 110.32 L329.00 110.45 L328.00 110.25 L327.00 110.37 L326.00 110.40 L325.00 110.21 L324.00 110.51 L323.00 110.06 L322.00 110.26 L321.00 110.25 L320.00 110.29 L319.00 110.55 L318.00 110.64 L317.00 110.53 L316.00 110.09 L315.00 110.05 L314.00 110.53 L313.00 110.50 L312.00 110.40 L311.00 110.36 L310.00 110.46 L309.00 110.55 L308.00 110.07 L307.00 110.06 L306.00 110.62 L305.00 110.57 L304.00 110.12 L303.00 110.07 L302.00 110.63 L301.00 110.36 L300.00 110.10 L299.00 110.61 L298.00 110.42 L297.00 110.42 L296.00 110.46 L295.00 110.40 L294.00 110.34 L293.00 110.06 L292.00 110.61 L291.00 110.57 L290.00 110.61 L289.00 110.62 L288.00 110.64 L287.00 110.61 L286.00 110.47 L285.00 110.25 L284.00 110.23 L283.00 110.13 L282.00 110.39 L281.00 110.63 L280.00 110.38 L279.00 110.34 L278.00 110.10 L277.00 110.34 L276.00 110.30 L275.00 110.47 L274.00 110.17 L273.00 110.35 L272.00 110.26 L271.00 110.37 L270.00 110.16 L269.00 110.37 L268.00 110.10 L267.00 110.36 L266.00 110.52 L265.00 110.56 L264.00 110.46 L263.00 110.64 L262.00 110.39 L261.00 110.07 L260.00 110.09 L259.00 110.45 L258.00 110.09 L257.00 110.57 L256.00 110.24 L255.00 110.64 L254.00 110.12 L253.00 110.39 L252.00 110.11 L251.00 110.59 L250.00 110.09 L249.00 110.44 L248.00 110.61 L247.00 110.12 L246.00 110.62 L245.00 110.19 L244.00 110.26 L243.00 110.39 L242.00 110.35 L241.00 110.62 L240.00 110.49 L239.00 110.27 L238.00 110.32 L237.00 110.19 L236.00 110.52 L235.00 110.27 L234.00 110.61 L233.00 110.08 L232.00 110.21 L231.00 110.52 L230.00 110.60 L229.00 110.45 L228.00 110.37 L227.00 110.49 L226.00 110.38 L225.00 110.42 L224.00 110.56 L223.00 110.57 L222.00 110.15 L221.00 110.57 L220.00 110.36 L219.00 110.22 L218.00 110.22 L217.00 110.21 L216.00 110.34 L215.00 110.13 L214.00 110.20 L213.00 110.23 L212.00 110.20 L211.00 110.37Z" fill="#ff0000" stroke="#ff0000" stroke-width="0.6" stroke-linejoin="round"/>
<circle cx="265.5" cy="81.25" r="2.2" fill="#ff0000"/>
<circle cx="456.7" cy="72.5" r="2.2" fill="#ff0000"/>
<circle cx="462.4" cy="53" r="2.2" fill="#ff0000"/>
<circle cx="513.8" cy="70" r="2.2" fill="#ff0000"/>
<circle cx="512.2" cy="99.4" r="2.2" fill="#ff0000"/>
<rect x="196.9" y="30.099999999999994" width="344.85" height="160.60" fill="none" stroke="#3a3a3a" stroke-width="0.75"/>
<rect x="479.5" y="33.25" width="60.00" height="23.75" rx="1.2" fill="#fff" fill-opacity="0.8" stroke="#d8d8d8" stroke-width="0.6"/>
<line x1="481.4" x2="492.2" y1="37.5" y2="37.5" stroke="#0000ff" stroke-width="0.9"/>
<line x1="481.4" x2="492.2" y1="45.0" y2="45.0" stroke="#111" stroke-width="1.1" stroke-dasharray="2.6 1.5"/>
<circle cx="486.7" cy="52.5" r="1.9" fill="#ff0000"/>
<text x="495.50" y="39.50" font-size="5.8" text-anchor="start" textLength="38.8" lengthAdjust="spacingAndGlyphs" fill="#222" stroke="#222" stroke-width="0.08">Data_Processed</text>
<text x="495.50" y="47.00" font-size="5.8" text-anchor="start" textLength="23.6" lengthAdjust="spacingAndGlyphs" fill="#222" stroke="#222" stroke-width="0.08">Start Line</text>
<text x="495.50" y="54.50" font-size="5.8" text-anchor="start" textLength="40.0" lengthAdjust="spacingAndGlyphs" fill="#222" stroke="#222" stroke-width="0.08">Peaks_Corrected</text>
</g>
</svg>
<div class="a" style="left:159.00px;top:370.00px;width:127.00px;height:14.60px;background:#f0f2f6"></div>
<svg class="a" style="left:0;top:0" width="692" height="400"><rect x="159.1" y="370.1" width="127.1" height="14.4" rx="0.8" fill="none" stroke="#f4cc62" stroke-width="1.5"/></svg>
<svg class="a" style="left:0;top:0" width="692" height="400" viewBox="0 0 692 400">
<path d="M160.4 377.6 L164.1 373.8 L167.8 377.6 L166.7 377.6 L166.7 380.3 L164.9 380.3 L164.9 378.4 L163.3 378.4 L163.3 380.3 L161.5 380.3 L161.5 377.6 Z M165.8 374.2 h1.1 v2 l-1.1 -1.1 z" fill="#0a0a0a" stroke="#0a0a0a" stroke-width="0.3" stroke-linejoin="round"/>
<path d="M178.6 376.7 H173 M175.9 373.6 L172.6 376.7 L175.9 379.8" stroke="#0a0a0a" stroke-width="1.55" fill="none" stroke-linejoin="round"/>
<path d="M182.4 376.7 H188 M185.1 373.6 L188.4 376.7 L185.1 379.8" stroke="#0a0a0a" stroke-width="1.55" fill="none" stroke-linejoin="round"/>
<line x1="192.3" x2="192.3" y1="371.5" y2="383" stroke="#e4e4e4" stroke-width="0.8"/>
<path d="M256.4 373.4 V380 M253.1 376.7 H259.7" stroke="#0a0a0a" stroke-width="1.3" fill="none"/>
<circle cx="256.4" cy="373.3" r="0.95" fill="#0a0a0a"/><circle cx="256.4" cy="380.1" r="0.95" fill="#0a0a0a"/>
<circle cx="253" cy="376.7" r="0.95" fill="#0a0a0a"/><circle cx="259.8" cy="376.7" r="0.95" fill="#0a0a0a"/>
<circle cx="266.6" cy="376.3" r="2.35" stroke="#0a0a0a" stroke-width="1.2" fill="none"/>
<path d="M268.3 378.1 L270.9 380.5" stroke="#0a0a0a" stroke-width="1.3"/>
<line x1="274.6" x2="274.6" y1="371.5" y2="383" stroke="#e4e4e4" stroke-width="0.8"/>
<path d="M277.6 373.8 h5.4 l1.4 1.4 v4.8 h-6.8 z" fill="#555" stroke="#444" stroke-width="0.6" stroke-linejoin="round"/>
<rect x="278.6" y="374.3" width="1.6" height="1.6" fill="#222"/>
<rect x="279.0" y="377.3" width="4.2" height="2.4" fill="#e8e8e8"/>
<path d="M282 374.3 h0.9 l0.9 0.9 v1.2 h-1.8 z" fill="#ddd"/>
</svg>
<div id="t55" class="t" style="left:198.20px;top:374.14px;font-size:12.60px;color:#333;transform:scale(0.5250,0.540);">批量更改标签(Z)</div>
<div class="a" style="left:188.30px;top:364.40px;width:12.40px;height:12.40px;border-radius:50%;background:rgba(255,255,255,0.85)"></div>
<div class="a" style="left:189.00px;top:365.10px;width:11.00px;height:11.00px;border-radius:50%;background:#f3b52f"></div>
<div id="t56" class="t" style="left:190.90px;top:367.94px;font-size:13.20px;color:#fff;transform:scale(0.4907,0.540);">17</div>
<svg class="a" style="left:0;top:0" width="692" height="400"><rect x="555.2" y="13.8" width="134" height="373.4" rx="0.8" fill="none" stroke="#8a40f0" stroke-width="1.6"/></svg>
<div class="a" style="left:557px;top:17px;width:131px;height:369px;border:1px solid #c6c6c6;border-radius:2.5px;box-shadow:inset 1px 1px 0 #fbfbfb,1px 1px 0 #fbfbfb"></div>
<div class="a" style="left:558.20px;top:15.10px;width:34.25px;height:5.00px;background:#f3f3f3"></div>
<div id="t57" class="t" style="left:559.40px;top:15.40px;font-size:9.80px;color:#222;transform:scale(0.4550,0.540);-webkit-text-stroke:0.18px #222">峰值坐标和信息</div>
<div id="t58" class="t" style="left:559.40px;top:26.02px;font-size:12.00px;color:#222;transform:scale(0.4763,0.540);">数据长度(点数)</div>
<div class="a" style="left:624.60px;top:24.00px;width:58.50px;height:9.20px;background:#ececec;border-radius:1px;border-bottom:0.9px solid #c6c6c6"></div>
<div id="t59" class="t" style="left:625.30px;top:26.05px;font-size:12.00px;color:#8c8c8c;transform:scale(0.5095,0.540);">33003000</div>
<div class="a" style="left:611.00px;top:21.00px;width:13.40px;height:13.40px;border-radius:50%;background:rgba(255,255,255,0.85)"></div>
<div class="a" style="left:611.70px;top:21.70px;width:12.00px;height:12.00px;border-radius:50%;background:#6a00e8"></div>
<div id="t60" class="t" style="left:614.10px;top:24.60px;font-size:14.80px;color:#fff;transform:scale(0.4372,0.540);">12</div>
<div id="t61" class="t" style="left:569.50px;top:54.95px;font-size:12.00px;color:#222;transform:scale(0.4893,0.540);">纠正前峰值个数</div>
<div id="t62" class="t" style="left:633.20px;top:54.99px;font-size:12.00px;color:#222;transform:scale(0.4881,0.540);">纠正后峰值个数</div>
<div class="a" style="left:560.70px;top:68.80px;width:58.10px;height:9.20px;background:#ececec;border-radius:1.5px;border-bottom:1px solid #c6c6c6"></div>
<div class="a" style="left:624.30px;top:68.80px;width:58.10px;height:9.20px;background:#ececec;border-radius:1.5px;border-bottom:1px solid #c6c6c6"></div>
<div id="t63" class="t" style="left:562.00px;top:69.79px;font-size:12.00px;color:#8c8c8c;transform:scale(0.5004,0.540);">25248</div>
<div id="t64" class="t" style="left:625.50px;top:70.01px;font-size:12.00px;color:#8c8c8c;transform:scale(0.5004,0.540);">25250</div>
<div class="a" style="left:557.30px;top:57.20px;width:13.40px;height:13.40px;border-radius:50%;background:rgba(255,255,255,0.85)"></div>
<div class="a" style="left:558.00px;top:57.90px;width:12.00px;height:12.00px;border-radius:50%;background:#6a00e8"></div>
<div id="t65" class="t" style="left:560.40px;top:60.80px;font-size:14.80px;color:#fff;transform:scale(0.4372,0.540);">13</div>
<div class="a" style="left:620.90px;top:57.20px;width:13.40px;height:13.40px;border-radius:50%;background:rgba(255,255,255,0.85)"></div>
<div class="a" style="left:621.60px;top:57.90px;width:12.00px;height:12.00px;border-radius:50%;background:#6a00e8"></div>
<div id="t66" class="t" style="left:624.00px;top:60.80px;font-size:14.80px;color:#fff;transform:scale(0.4372,0.540);">14</div>
<div class="a" style="left:560.00px;top:80.00px;width:59.70px;height:303.00px;background:#fbfbfb"></div>
<div class="a" style="left:615.70px;top:80.00px;width:4.00px;height:303.00px;background:#f6f6f6"></div>
<div class="a" style="left:617.90px;top:85.00px;width:0.80px;height:5.10px;background:#9a9a9a"></div>
<div class="a" style="left:560.00px;top:89.60px;width:55.70px;height:0.50px;background:#ececec"></div>
<div class="a" style="left:580.30px;top:89.60px;width:0.60px;height:293.00px;background:#e8e8e8"></div>
<div id="t67" class="t" style="left:586.90px;top:82.87px;font-size:12.70px;color:#222;transform:scale(0.4918,0.540);">Original</div>
<div id="t68" class="t" style="left:561.40px;top:93.55px;font-size:12.40px;color:#222;transform:scale(0.4778,0.540);">1</div>
<div id="t69" class="t" style="left:581.60px;top:93.55px;font-size:12.40px;color:#222;transform:scale(0.4786,0.540);">1756</div>
<div class="a" style="left:560.00px;top:100.60px;width:55.70px;height:0.50px;background:#efefef"></div>
<div id="t70" class="t" style="left:561.40px;top:104.34px;font-size:12.40px;color:#222;transform:scale(0.4778,0.540);">2</div>
<div id="t71" class="t" style="left:581.60px;top:104.34px;font-size:12.40px;color:#222;transform:scale(0.4786,0.540);">2629</div>
<div class="a" style="left:560.00px;top:111.39px;width:55.70px;height:0.50px;background:#efefef"></div>
<div id="t72" class="t" style="left:561.40px;top:115.13px;font-size:12.40px;color:#222;transform:scale(0.4778,0.540);">3</div>
<div id="t73" class="t" style="left:581.60px;top:115.13px;font-size:12.40px;color:#222;transform:scale(0.4786,0.540);">4954</div>
<div class="a" style="left:560.00px;top:122.18px;width:55.70px;height:0.50px;background:#efefef"></div>
<div id="t74" class="t" style="left:561.40px;top:125.92px;font-size:12.40px;color:#222;transform:scale(0.4778,0.540);">4</div>
<div id="t75" class="t" style="left:581.60px;top:125.92px;font-size:12.40px;color:#222;transform:scale(0.4786,0.540);">6250</div>
<div class="a" style="left:560.00px;top:132.97px;width:55.70px;height:0.50px;background:#efefef"></div>
<div id="t76" class="t" style="left:561.40px;top:136.71px;font-size:12.40px;color:#222;transform:scale(0.4778,0.540);">5</div>
<div id="t77" class="t" style="left:581.60px;top:136.71px;font-size:12.40px;color:#222;transform:scale(0.4729,0.540);">10061</div>
<div class="a" style="left:560.00px;top:143.76px;width:55.70px;height:0.50px;background:#efefef"></div>
<div id="t78" class="t" style="left:561.40px;top:147.50px;font-size:12.40px;color:#222;transform:scale(0.4778,0.540);">6</div>
<div id="t79" class="t" style="left:581.60px;top:147.50px;font-size:12.40px;color:#222;transform:scale(0.4859,0.540);">11303</div>
<div class="a" style="left:560.00px;top:154.55px;width:55.70px;height:0.50px;background:#efefef"></div>
<div id="t80" class="t" style="left:561.40px;top:158.29px;font-size:12.40px;color:#222;transform:scale(0.4778,0.540);">7</div>
<div id="t81" class="t" style="left:581.60px;top:158.29px;font-size:12.40px;color:#222;transform:scale(0.4729,0.540);">20281</div>
<div class="a" style="left:560.00px;top:165.34px;width:55.70px;height:0.50px;background:#efefef"></div>
<div id="t82" class="t" style="left:561.40px;top:169.08px;font-size:12.40px;color:#222;transform:scale(0.4778,0.540);">8</div>
<div id="t83" class="t" style="left:581.60px;top:169.08px;font-size:12.40px;color:#222;transform:scale(0.4729,0.540);">24689</div>
<div class="a" style="left:560.00px;top:176.13px;width:55.70px;height:0.50px;background:#efefef"></div>
<div id="t84" class="t" style="left:561.40px;top:179.87px;font-size:12.40px;color:#222;transform:scale(0.4778,0.540);">9</div>
<div id="t85" class="t" style="left:581.60px;top:179.87px;font-size:12.40px;color:#222;transform:scale(0.4729,0.540);">26499</div>
<div class="a" style="left:560.00px;top:186.92px;width:55.70px;height:0.50px;background:#efefef"></div>
<div id="t86" class="t" style="left:561.40px;top:190.66px;font-size:12.40px;color:#222;transform:scale(0.4784,0.540);">10</div>
<div id="t87" class="t" style="left:581.60px;top:190.66px;font-size:12.40px;color:#222;transform:scale(0.4729,0.540);">27302</div>
<div class="a" style="left:560.00px;top:197.71px;width:55.70px;height:0.50px;background:#efefef"></div>
<div id="t88" class="t" style="left:561.40px;top:201.45px;font-size:12.40px;color:#222;transform:scale(0.5126,0.540);">11</div>
<div id="t89" class="t" style="left:581.60px;top:201.45px;font-size:12.40px;color:#222;transform:scale(0.4729,0.540);">28050</div>
<div class="a" style="left:560.00px;top:208.50px;width:55.70px;height:0.50px;background:#efefef"></div>
<div id="t90" class="t" style="left:561.40px;top:212.24px;font-size:12.40px;color:#222;transform:scale(0.4784,0.540);">12</div>
<div id="t91" class="t" style="left:581.60px;top:212.24px;font-size:12.40px;color:#222;transform:scale(0.4729,0.540);">28994</div>
<div class="a" style="left:560.00px;top:219.29px;width:55.70px;height:0.50px;background:#efefef"></div>
<div id="t92" class="t" style="left:561.40px;top:223.03px;font-size:12.40px;color:#222;transform:scale(0.4784,0.540);">13</div>
<div id="t93" class="t" style="left:581.60px;top:223.03px;font-size:12.40px;color:#222;transform:scale(0.4729,0.540);">29922</div>
<div class="a" style="left:560.00px;top:230.08px;width:55.70px;height:0.50px;background:#efefef"></div>
<div id="t94" class="t" style="left:561.40px;top:233.82px;font-size:12.40px;color:#222;transform:scale(0.4784,0.540);">14</div>
<div id="t95" class="t" style="left:581.60px;top:233.82px;font-size:12.40px;color:#222;transform:scale(0.4729,0.540);">30440</div>
<div class="a" style="left:560.00px;top:240.87px;width:55.70px;height:0.50px;background:#efefef"></div>
<div id="t96" class="t" style="left:561.40px;top:244.61px;font-size:12.40px;color:#222;transform:scale(0.4784,0.540);">15</div>
<div id="t97" class="t" style="left:581.60px;top:244.61px;font-size:12.40px;color:#222;transform:scale(0.4729,0.540);">32010</div>
<div class="a" style="left:560.00px;top:251.66px;width:55.70px;height:0.50px;background:#efefef"></div>
<div id="t98" class="t" style="left:561.40px;top:255.40px;font-size:12.40px;color:#222;transform:scale(0.4784,0.540);">16</div>
<div id="t99" class="t" style="left:581.60px;top:255.40px;font-size:12.40px;color:#222;transform:scale(0.4729,0.540);">34245</div>
<div class="a" style="left:560.00px;top:262.45px;width:55.70px;height:0.50px;background:#efefef"></div>
<div id="t100" class="t" style="left:561.40px;top:266.19px;font-size:12.40px;color:#222;transform:scale(0.4784,0.540);">17</div>
<div id="t101" class="t" style="left:581.60px;top:266.19px;font-size:12.40px;color:#222;transform:scale(0.4729,0.540);">35691</div>
<div class="a" style="left:560.00px;top:273.24px;width:55.70px;height:0.50px;background:#efefef"></div>
<div id="t102" class="t" style="left:561.40px;top:276.98px;font-size:12.40px;color:#222;transform:scale(0.4784,0.540);">18</div>
<div id="t103" class="t" style="left:581.60px;top:276.98px;font-size:12.40px;color:#222;transform:scale(0.4729,0.540);">37656</div>
<div class="a" style="left:560.00px;top:284.03px;width:55.70px;height:0.50px;background:#efefef"></div>
<div id="t104" class="t" style="left:561.40px;top:287.77px;font-size:12.40px;color:#222;transform:scale(0.4784,0.540);">19</div>
<div id="t105" class="t" style="left:581.60px;top:287.77px;font-size:12.40px;color:#222;transform:scale(0.4729,0.540);">38973</div>
<div class="a" style="left:560.00px;top:294.82px;width:55.70px;height:0.50px;background:#efefef"></div>
<div id="t106" class="t" style="left:561.40px;top:298.56px;font-size:12.40px;color:#222;transform:scale(0.4784,0.540);">20</div>
<div id="t107" class="t" style="left:581.60px;top:298.56px;font-size:12.40px;color:#222;transform:scale(0.4729,0.540);">40874</div>
<div class="a" style="left:560.00px;top:305.61px;width:55.70px;height:0.50px;background:#efefef"></div>
<div id="t108" class="t" style="left:561.40px;top:309.35px;font-size:12.40px;color:#222;transform:scale(0.4784,0.540);">21</div>
<div id="t109" class="t" style="left:581.60px;top:309.35px;font-size:12.40px;color:#222;transform:scale(0.4729,0.540);">41897</div>
<div class="a" style="left:560.00px;top:316.40px;width:55.70px;height:0.50px;background:#efefef"></div>
<div id="t110" class="t" style="left:561.40px;top:320.14px;font-size:12.40px;color:#222;transform:scale(0.4784,0.540);">22</div>
<div id="t111" class="t" style="left:581.60px;top:320.14px;font-size:12.40px;color:#222;transform:scale(0.4729,0.540);">44169</div>
<div class="a" style="left:560.00px;top:327.19px;width:55.70px;height:0.50px;background:#efefef"></div>
<div id="t112" class="t" style="left:561.40px;top:330.93px;font-size:12.40px;color:#222;transform:scale(0.4784,0.540);">23</div>
<div id="t113" class="t" style="left:581.60px;top:330.93px;font-size:12.40px;color:#222;transform:scale(0.4729,0.540);">45060</div>
<div class="a" style="left:560.00px;top:337.98px;width:55.70px;height:0.50px;background:#efefef"></div>
<div id="t114" class="t" style="left:561.40px;top:341.72px;font-size:12.40px;color:#222;transform:scale(0.4784,0.540);">24</div>
<div id="t115" class="t" style="left:581.60px;top:341.72px;font-size:12.40px;color:#222;transform:scale(0.4729,0.540);">46151</div>
<div class="a" style="left:560.00px;top:348.77px;width:55.70px;height:0.50px;background:#efefef"></div>
<div id="t116" class="t" style="left:561.40px;top:352.51px;font-size:12.40px;color:#222;transform:scale(0.4784,0.540);">25</div>
<div id="t117" class="t" style="left:581.60px;top:352.51px;font-size:12.40px;color:#222;transform:scale(0.4729,0.540);">46995</div>
<div class="a" style="left:560.00px;top:359.56px;width:55.70px;height:0.50px;background:#efefef"></div>
<div id="t118" class="t" style="left:561.40px;top:363.30px;font-size:12.40px;color:#222;transform:scale(0.4784,0.540);">26</div>
<div id="t119" class="t" style="left:581.60px;top:363.30px;font-size:12.40px;color:#222;transform:scale(0.4729,0.540);">47878</div>
<div class="a" style="left:560.00px;top:370.35px;width:55.70px;height:0.50px;background:#efefef"></div>
<div id="t120" class="t" style="left:561.40px;top:374.09px;font-size:12.40px;color:#222;transform:scale(0.4784,0.540);">27</div>
<div id="t121" class="t" style="left:581.60px;top:374.09px;font-size:12.40px;color:#222;transform:scale(0.4729,0.540);">49054</div>
<div class="a" style="left:560.00px;top:381.14px;width:55.70px;height:0.50px;background:#efefef"></div>
<div class="a" style="left:561.60px;top:78.00px;width:13.20px;height:13.20px;border-radius:50%;background:rgba(255,255,255,0.85)"></div>
<div class="a" style="left:562.30px;top:78.70px;width:11.80px;height:11.80px;border-radius:50%;background:#6a00e8"></div>
<div id="t122" class="t" style="left:564.60px;top:81.50px;font-size:14.80px;color:#fff;transform:scale(0.4372,0.540);">15</div>
<div class="a" style="left:623.70px;top:80.00px;width:59.90px;height:303.00px;background:#fbfbfb"></div>
<div class="a" style="left:679.60px;top:80.00px;width:4.00px;height:303.00px;background:#f6f6f6"></div>
<div class="a" style="left:681.80px;top:85.00px;width:0.80px;height:5.10px;background:#9a9a9a"></div>
<div class="a" style="left:623.70px;top:89.60px;width:55.90px;height:0.50px;background:#ececec"></div>
<div class="a" style="left:644.00px;top:89.60px;width:0.60px;height:293.00px;background:#e8e8e8"></div>
<div id="t123" class="t" style="left:648.15px;top:82.87px;font-size:12.70px;color:#222;transform:scale(0.4774,0.540);">Corrected</div>
<div id="t124" class="t" style="left:625.10px;top:93.55px;font-size:12.40px;color:#222;transform:scale(0.4778,0.540);">1</div>
<div id="t125" class="t" style="left:645.30px;top:93.55px;font-size:12.40px;color:#222;transform:scale(0.4786,0.540);">1756</div>
<div class="a" style="left:623.70px;top:100.60px;width:55.90px;height:0.50px;background:#efefef"></div>
<div id="t126" class="t" style="left:625.10px;top:104.34px;font-size:12.40px;color:#222;transform:scale(0.4778,0.540);">2</div>
<div id="t127" class="t" style="left:645.30px;top:104.34px;font-size:12.40px;color:#222;transform:scale(0.4786,0.540);">2629</div>
<div class="a" style="left:623.70px;top:111.39px;width:55.90px;height:0.50px;background:#efefef"></div>
<div id="t128" class="t" style="left:625.10px;top:115.13px;font-size:12.40px;color:#222;transform:scale(0.4778,0.540);">3</div>
<div id="t129" class="t" style="left:645.30px;top:115.13px;font-size:12.40px;color:#222;transform:scale(0.4786,0.540);">4954</div>
<div class="a" style="left:623.70px;top:122.18px;width:55.90px;height:0.50px;background:#efefef"></div>
<div id="t130" class="t" style="left:625.10px;top:125.92px;font-size:12.40px;color:#222;transform:scale(0.4778,0.540);">4</div>
<div id="t131" class="t" style="left:645.30px;top:125.92px;font-size:12.40px;color:#222;transform:scale(0.4786,0.540);">6250</div>
<div class="a" style="left:623.70px;top:132.97px;width:55.90px;height:0.50px;background:#efefef"></div>
<div id="t132" class="t" style="left:625.10px;top:136.71px;font-size:12.40px;color:#222;transform:scale(0.4778,0.540);">5</div>
<div id="t133" class="t" style="left:645.30px;top:136.71px;font-size:12.40px;color:#222;transform:scale(0.4729,0.540);">10061</div>
<div class="a" style="left:623.70px;top:143.76px;width:55.90px;height:0.50px;background:#efefef"></div>
<div id="t134" class="t" style="left:625.10px;top:147.50px;font-size:12.40px;color:#222;transform:scale(0.4778,0.540);">6</div>
<div id="t135" class="t" style="left:645.30px;top:147.50px;font-size:12.40px;color:#222;transform:scale(0.4859,0.540);">11303</div>
<div class="a" style="left:623.70px;top:154.55px;width:55.90px;height:0.50px;background:#efefef"></div>
<div id="t136" class="t" style="left:625.10px;top:158.29px;font-size:12.40px;color:#222;transform:scale(0.4778,0.540);">7</div>
<div id="t137" class="t" style="left:645.30px;top:158.29px;font-size:12.40px;color:#222;transform:scale(0.4729,0.540);">20281</div>
<div class="a" style="left:623.70px;top:165.34px;width:55.90px;height:0.50px;background:#efefef"></div>
<div id="t138" class="t" style="left:625.10px;top:169.08px;font-size:12.40px;color:#222;transform:scale(0.4778,0.540);">8</div>
<div id="t139" class="t" style="left:645.30px;top:169.08px;font-size:12.40px;color:#222;transform:scale(0.4729,0.540);">24689</div>
<div class="a" style="left:623.70px;top:176.13px;width:55.90px;height:0.50px;background:#efefef"></div>
<div id="t140" class="t" style="left:625.10px;top:179.87px;font-size:12.40px;color:#222;transform:scale(0.4778,0.540);">9</div>
<div id="t141" class="t" style="left:645.30px;top:179.87px;font-size:12.40px;color:#222;transform:scale(0.4729,0.540);">26499</div>
<div class="a" style="left:623.70px;top:186.92px;width:55.90px;height:0.50px;background:#efefef"></div>
<div id="t142" class="t" style="left:625.10px;top:190.66px;font-size:12.40px;color:#222;transform:scale(0.4784,0.540);">10</div>
<div id="t143" class="t" style="left:645.30px;top:190.66px;font-size:12.40px;color:#222;transform:scale(0.4729,0.540);">27302</div>
<div class="a" style="left:623.70px;top:197.71px;width:55.90px;height:0.50px;background:#efefef"></div>
<div id="t144" class="t" style="left:625.10px;top:201.45px;font-size:12.40px;color:#222;transform:scale(0.5126,0.540);">11</div>
<div id="t145" class="t" style="left:645.30px;top:201.45px;font-size:12.40px;color:#222;transform:scale(0.4729,0.540);">28050</div>
<div class="a" style="left:623.70px;top:208.50px;width:55.90px;height:0.50px;background:#efefef"></div>
<div id="t146" class="t" style="left:625.10px;top:212.24px;font-size:12.40px;color:#222;transform:scale(0.4784,0.540);">12</div>
<div id="t147" class="t" style="left:645.30px;top:212.24px;font-size:12.40px;color:#222;transform:scale(0.4729,0.540);">28994</div>
<div class="a" style="left:623.70px;top:219.29px;width:55.90px;height:0.50px;background:#efefef"></div>
<div id="t148" class="t" style="left:625.10px;top:223.03px;font-size:12.40px;color:#222;transform:scale(0.4784,0.540);">13</div>
<div id="t149" class="t" style="left:645.30px;top:223.03px;font-size:12.40px;color:#222;transform:scale(0.4729,0.540);">29922</div>
<div class="a" style="left:623.70px;top:230.08px;width:55.90px;height:0.50px;background:#efefef"></div>
<div id="t150" class="t" style="left:625.10px;top:233.82px;font-size:12.40px;color:#222;transform:scale(0.4784,0.540);">14</div>
<div id="t151" class="t" style="left:645.30px;top:233.82px;font-size:12.40px;color:#222;transform:scale(0.4729,0.540);">30440</div>
<div class="a" style="left:623.70px;top:240.87px;width:55.90px;height:0.50px;background:#efefef"></div>
<div id="t152" class="t" style="left:625.10px;top:244.61px;font-size:12.40px;color:#222;transform:scale(0.4784,0.540);">15</div>
<div id="t153" class="t" style="left:645.30px;top:244.61px;font-size:12.40px;color:#222;transform:scale(0.4729,0.540);">32010</div>
<div class="a" style="left:623.70px;top:251.66px;width:55.90px;height:0.50px;background:#efefef"></div>
<div id="t154" class="t" style="left:625.10px;top:255.40px;font-size:12.40px;color:#222;transform:scale(0.4784,0.540);">16</div>
<div id="t155" class="t" style="left:645.30px;top:255.40px;font-size:12.40px;color:#222;transform:scale(0.4729,0.540);">34245</div>
<div class="a" style="left:623.70px;top:262.45px;width:55.90px;height:0.50px;background:#efefef"></div>
<div id="t156" class="t" style="left:625.10px;top:266.19px;font-size:12.40px;color:#222;transform:scale(0.4784,0.540);">17</div>
<div id="t157" class="t" style="left:645.30px;top:266.19px;font-size:12.40px;color:#222;transform:scale(0.4729,0.540);">35691</div>
<div class="a" style="left:623.70px;top:273.24px;width:55.90px;height:0.50px;background:#efefef"></div>
<div id="t158" class="t" style="left:625.10px;top:276.98px;font-size:12.40px;color:#222;transform:scale(0.4784,0.540);">18</div>
<div id="t159" class="t" style="left:645.30px;top:276.98px;font-size:12.40px;color:#222;transform:scale(0.4729,0.540);">37656</div>
<div class="a" style="left:623.70px;top:284.03px;width:55.90px;height:0.50px;background:#efefef"></div>
<div id="t160" class="t" style="left:625.10px;top:287.77px;font-size:12.40px;color:#222;transform:scale(0.4784,0.540);">19</div>
<div id="t161" class="t" style="left:645.30px;top:287.77px;font-size:12.40px;color:#222;transform:scale(0.4729,0.540);">38973</div>
<div class="a" style="left:623.70px;top:294.82px;width:55.90px;height:0.50px;background:#efefef"></div>
<div id="t162" class="t" style="left:625.10px;top:298.56px;font-size:12.40px;color:#222;transform:scale(0.4784,0.540);">20</div>
<div id="t163" class="t" style="left:645.30px;top:298.56px;font-size:12.40px;color:#222;transform:scale(0.4729,0.540);">40874</div>
<div class="a" style="left:623.70px;top:305.61px;width:55.90px;height:0.50px;background:#efefef"></div>
<div id="t164" class="t" style="left:625.10px;top:309.35px;font-size:12.40px;color:#222;transform:scale(0.4784,0.540);">21</div>
<div id="t165" class="t" style="left:645.30px;top:309.35px;font-size:12.40px;color:#222;transform:scale(0.4729,0.540);">41897</div>
<div class="a" style="left:623.70px;top:316.40px;width:55.90px;height:0.50px;background:#efefef"></div>
<div id="t166" class="t" style="left:625.10px;top:320.14px;font-size:12.40px;color:#222;transform:scale(0.4784,0.540);">22</div>
<div id="t167" class="t" style="left:645.30px;top:320.14px;font-size:12.40px;color:#222;transform:scale(0.4729,0.540);">44169</div>
<div class="a" style="left:623.70px;top:327.19px;width:55.90px;height:0.50px;background:#efefef"></div>
<div id="t168" class="t" style="left:625.10px;top:330.93px;font-size:12.40px;color:#222;transform:scale(0.4784,0.540);">23</div>
<div id="t169" class="t" style="left:645.30px;top:330.93px;font-size:12.40px;color:#222;transform:scale(0.4729,0.540);">45060</div>
<div class="a" style="left:623.70px;top:337.98px;width:55.90px;height:0.50px;background:#efefef"></div>
<div id="t170" class="t" style="left:625.10px;top:341.72px;font-size:12.40px;color:#222;transform:scale(0.4784,0.540);">24</div>
<div id="t171" class="t" style="left:645.30px;top:341.72px;font-size:12.40px;color:#222;transform:scale(0.4729,0.540);">46151</div>
<div class="a" style="left:623.70px;top:348.77px;width:55.90px;height:0.50px;background:#efefef"></div>
<div id="t172" class="t" style="left:625.10px;top:352.51px;font-size:12.40px;color:#222;transform:scale(0.4784,0.540);">25</div>
<div id="t173" class="t" style="left:645.30px;top:352.51px;font-size:12.40px;color:#222;transform:scale(0.4729,0.540);">46995</div>
<div class="a" style="left:623.70px;top:359.56px;width:55.90px;height:0.50px;background:#efefef"></div>
<div id="t174" class="t" style="left:625.10px;top:363.30px;font-size:12.40px;color:#222;transform:scale(0.4784,0.540);">26</div>
<div id="t175" class="t" style="left:645.30px;top:363.30px;font-size:12.40px;color:#222;transform:scale(0.4729,0.540);">47878</div>
<div class="a" style="left:623.70px;top:370.35px;width:55.90px;height:0.50px;background:#efefef"></div>
<div id="t176" class="t" style="left:625.10px;top:374.09px;font-size:12.40px;color:#222;transform:scale(0.4784,0.540);">27</div>
<div id="t177" class="t" style="left:645.30px;top:374.09px;font-size:12.40px;color:#222;transform:scale(0.4729,0.540);">49054</div>
<div class="a" style="left:623.70px;top:381.14px;width:55.90px;height:0.50px;background:#efefef"></div>
<div class="a" style="left:630.20px;top:78.00px;width:13.20px;height:13.20px;border-radius:50%;background:rgba(255,255,255,0.85)"></div>
<div class="a" style="left:630.90px;top:78.70px;width:11.80px;height:11.80px;border-radius:50%;background:#6a00e8"></div>
<div id="t178" class="t" style="left:633.20px;top:81.50px;font-size:14.80px;color:#fff;transform:scale(0.4372,0.540);">16</div>
<div id="t179" class="t" style="left:2.50px;top:392.91px;font-size:9.60px;color:#333;transform:scale(0.4437,0.540);">13:00:19 操作完成</div>
<div class="a" style="left:343.00px;top:390.80px;width:341.50px;height:8.40px;border-radius:2.6px;border:1px solid #a4a4d8;background:linear-gradient(90deg,#98f898,#9cd0d0 50%,#a0a0f8)"></div>
<div id="t180" class="t" style="left:506.00px;top:392.56px;font-size:12.00px;color:#222;transform:scale(0.4820,0.540);">100%</div>
</body></html>
